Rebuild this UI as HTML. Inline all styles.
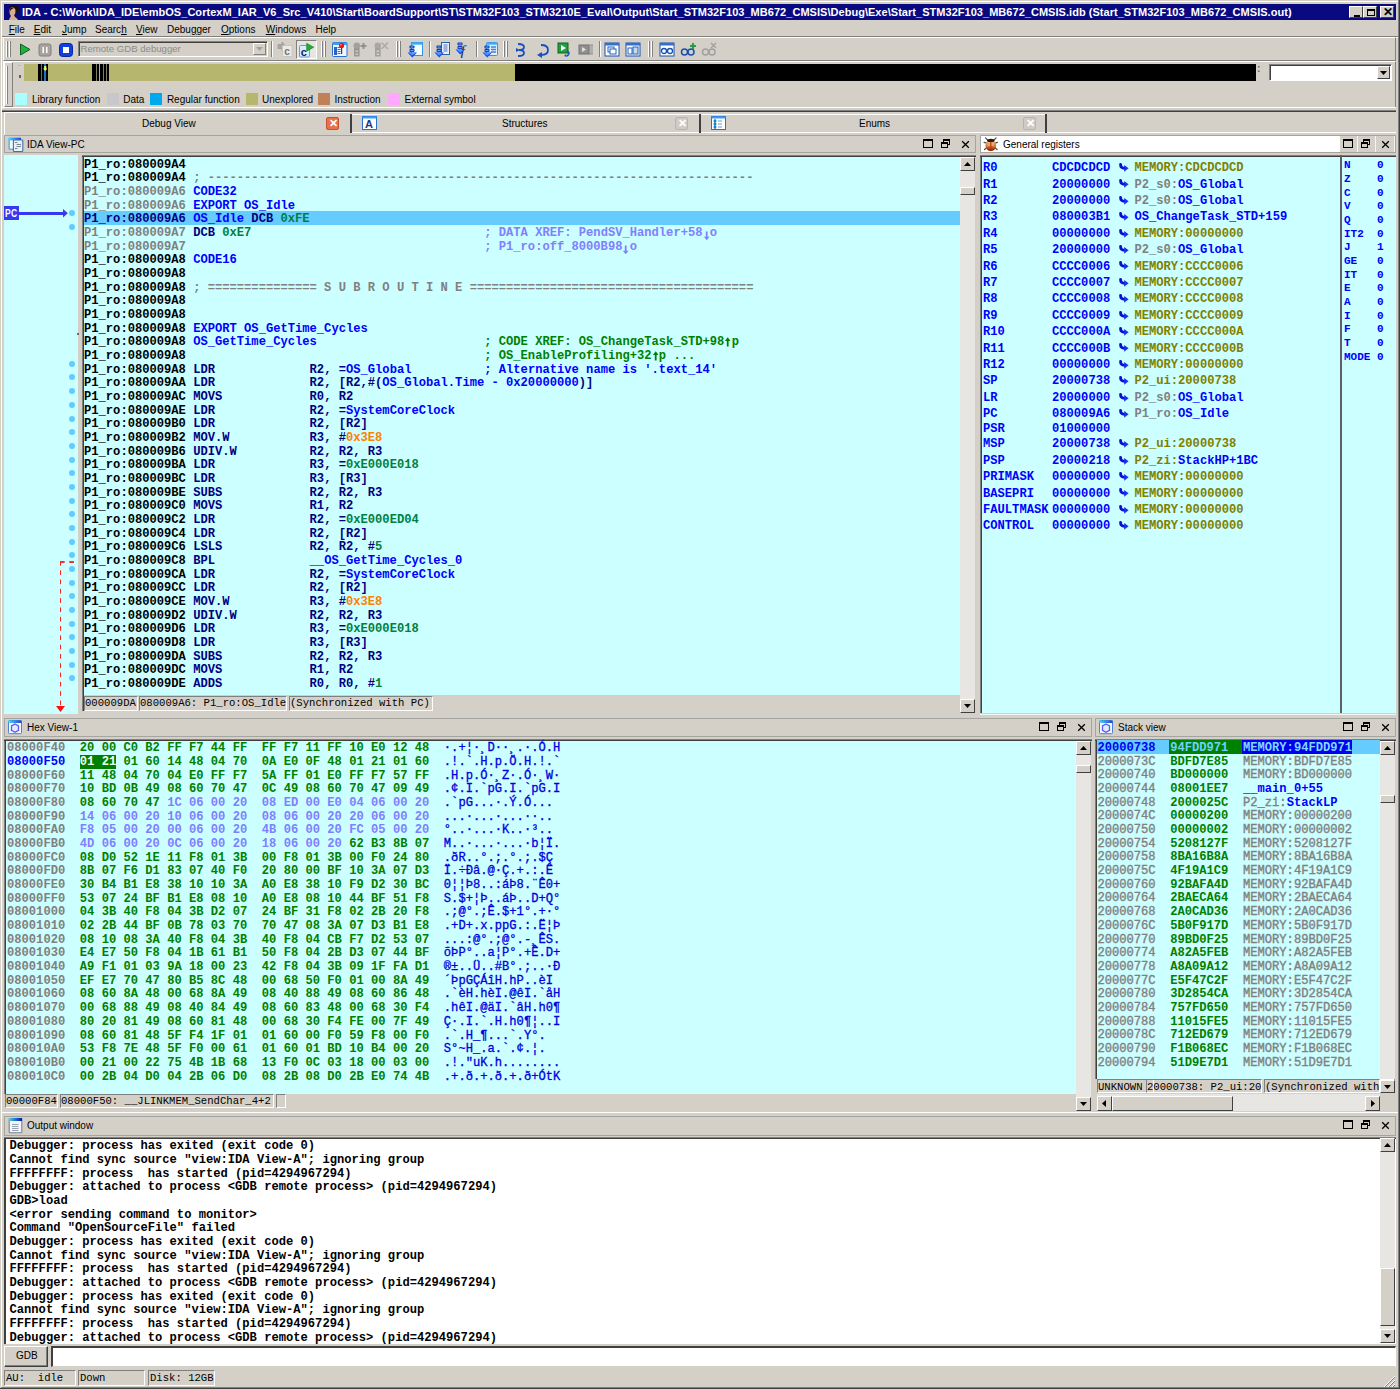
<!DOCTYPE html><html><head><meta charset="utf-8"><style>
*{margin:0;padding:0;box-sizing:border-box}
html,body{width:1400px;height:1389px;overflow:hidden;background:#d4d0c8}
body{position:relative;font-family:"Liberation Sans", sans-serif;font-size:10px;color:#000}
div{position:absolute}
.t{white-space:pre;line-height:12px}
.m{font-family:"Liberation Mono", monospace;font-weight:bold;font-size:12.14px;line-height:13.68px;white-space:pre}
.m div{position:static}
.ln{height:13.68px;white-space:pre}
.sunk{border-top:1px solid #808080;border-left:1px solid #808080;border-right:1px solid #fff;border-bottom:1px solid #fff}
.sunk2{border-top:2px solid #404040;border-left:2px solid #404040;border-right:1px solid #fff;border-bottom:1px solid #fff}
.rais{border-top:1px solid #fff;border-left:1px solid #fff;border-right:1px solid #404040;border-bottom:1px solid #404040;background:#d4d0c8}
.sm{font-family:'Liberation Mono',monospace;font-size:10.5px;line-height:13px;white-space:pre}
</style></head><body><div style="left:0px;top:0px;width:1400px;height:1389px;background:#d4d0c8"></div><div style="left:1px;top:1px;width:1398px;height:1px;background:#fff"></div><div style="left:1px;top:1px;width:1px;height:1387px;background:#fff"></div><div style="left:1398px;top:0px;width:1px;height:1389px;background:#808080"></div><div style="left:1399px;top:0px;width:1px;height:1389px;background:#404040"></div><div style="left:0px;top:1388px;width:1400px;height:1px;background:#404040"></div><div style="left:1px;top:1387px;width:1398px;height:1px;background:#808080"></div><div style="left:4px;top:4px;width:1392px;height:16px;background:#0a0a80"></div><svg style="position:absolute;left:6px;top:4px" width="14" height="16" viewBox="0 0 14 16">
<path d="M3 4 Q4 1 8 1 Q12 1 13 5 Q13 9 11 10 L10 8 Q10 5 8 4 Z" fill="#1a1008"/>
<path d="M3.5 5 Q4 3 7 3.5 Q9.5 4 9.5 7 Q9.5 10 8 11 L9 13 Q11 14 12 16 L3 16 Q4 13 5 12 Q3 10 3.5 5Z" fill="#d8b090"/>
<path d="M3.5 5 Q5 3 8 4 L6 5 Q4 6 4 8 Z" fill="#201008"/>
</svg><div class="t" style="left:22px;top:5px;color:#fff;font-weight:bold;font-size:11px;line-height:14px;letter-spacing:0.035px">IDA - C:\Work\IDA_IDE\embOS_CortexM_IAR_V6_Src_V410\Start\BoardSupport\ST\STM32F103_STM3210E_Eval\Output\Start_STM32F103_MB672_CMSIS\Debug\Exe\Start_STM32F103_MB672_CMSIS.idb (Start_STM32F103_MB672_CMSIS.out)</div><div style="left:1349px;top:6px;width:14px;height:12px;background:#d4d0c8;border-top:1px solid #fff;border-left:1px solid #fff;border-right:1px solid #404040;border-bottom:1px solid #404040"><div style="left:4px;top:8px;width:6px;height:2px;background:#000"></div></div><div style="left:1363px;top:6px;width:14px;height:12px;background:#d4d0c8;border-top:1px solid #fff;border-left:1px solid #fff;border-right:1px solid #404040;border-bottom:1px solid #404040"><div style="left:3px;top:2px;width:8px;height:7px;border:1px solid #000;border-top-width:2px"></div></div><div style="left:1380px;top:6px;width:14px;height:12px;background:#d4d0c8;border-top:1px solid #fff;border-left:1px solid #fff;border-right:1px solid #404040;border-bottom:1px solid #404040"><div class="t" style="left:2px;top:-1px;font-size:12px;font-weight:bold;line-height:12px">&#x2715;</div></div><div class="t" style="left:8.75px;top:24px;font-size:10px;line-height:12px"><u>F</u>ile</div><div class="t" style="left:33.75px;top:24px;font-size:10px;line-height:12px"><u>E</u>dit</div><div class="t" style="left:62px;top:24px;font-size:10px;line-height:12px"><u>J</u>ump</div><div class="t" style="left:95px;top:24px;font-size:10px;line-height:12px">Searc<u>h</u></div><div class="t" style="left:136px;top:24px;font-size:10px;line-height:12px"><u>V</u>iew</div><div class="t" style="left:167px;top:24px;font-size:10px;line-height:12px">Debu<u>g</u>ger</div><div class="t" style="left:221px;top:24px;font-size:10px;line-height:12px"><u>O</u>ptions</div><div class="t" style="left:265.75px;top:24px;font-size:10px;line-height:12px"><u>W</u>indows</div><div class="t" style="left:315.5px;top:24px;font-size:10px;line-height:12px">Help</div><div style="left:2px;top:36px;width:1396px;height:1px;background:#808080"></div><div style="left:2px;top:37px;width:1396px;height:1px;background:#fff"></div><div style="left:3px;top:37px;width:1393px;height:24px;border-top:1px solid #fff;border-left:1px solid #fff;border-bottom:1px solid #808080;border-right:1px solid #808080"></div><div style="left:6px;top:41px;width:2px;height:16px;border-left:1px solid #fff;border-right:1px solid #808080"></div><div style="left:9px;top:41px;width:2px;height:16px;border-left:1px solid #fff;border-right:1px solid #808080"></div><svg style="position:absolute;left:19px;top:43px" width="12" height="13" viewBox="0 0 12 13"><path d="M1.5 1 L11 6.5 L1.5 12 Z" fill="#20b040" stroke="#106020" stroke-width="1"/></svg><svg style="position:absolute;left:38px;top:43px" width="14" height="14" viewBox="0 0 14 14"><rect x="1" y="1" width="12" height="12" rx="2" fill="#a8a49c" stroke="#808080"/><rect x="4.5" y="4" width="1.5" height="6" fill="#fff"/><rect x="8" y="4" width="1.5" height="6" fill="#fff"/></svg><svg style="position:absolute;left:59px;top:43px" width="15" height="14" viewBox="0 0 15 14"><rect x="0.5" y="0.5" width="13" height="13" rx="3" fill="#1040e0" stroke="#0828a0"/><rect x="4" y="4" width="6" height="6" fill="#fff"/></svg><div style="left:78px;top:41px;width:190px;height:16px;background:#d4d0c8;border-top:1px solid #808080;border-left:1px solid #808080;border-right:1px solid #fff;border-bottom:1px solid #fff;box-shadow:inset 1px 1px 0 #404040"></div><div class="t" style="left:80.5px;top:43px;color:#8c8c8c;font-size:9.6px;line-height:12px">Remote GDB debugger</div><div style="left:253px;top:43px;width:13px;height:12px;background:#d4d0c8;border-top:1px solid #fff;border-left:1px solid #fff;border-right:1px solid #808080;border-bottom:1px solid #808080"><svg style="position:absolute;left:2px;top:3px" width="8" height="5"><path d="M0 0 L7 0 L3.5 4Z" fill="#a0a0a0"/></svg></div><div style="left:271px;top:41px;width:2px;height:16px;border-left:1px solid #808080;border-right:1px solid #fff"></div><svg style="position:absolute;left:277px;top:41px" width="17" height="17" viewBox="0 0 17 17"><path d="M1 3.5h4v-2.5l4 4.5l-4 4.5v-2.5h-4Z" fill="#a8a8a8" stroke="#909090" stroke-width="0.6"/><rect x="5.5" y="4.5" width="9.5" height="11" rx="1" fill="#eceae4" stroke="#c8c6c0"/><text x="7.2" y="14" font-family="Liberation Sans" font-weight="bold" font-size="10" fill="#707070">c</text></svg><div style="left:296px;top:39.5px;width:20.5px;height:19px;border-top:1px solid #808080;border-left:1px solid #808080;border-right:1px solid #fff;border-bottom:1px solid #fff;background:#e8e6e2"></div><svg style="position:absolute;left:298px;top:42px" width="18" height="16" viewBox="0 0 18 16"><rect x="1.5" y="3.5" width="10" height="11.5" rx="1" fill="#d8ecff" stroke="#7098d0"/><text x="2.8" y="13.5" font-family="Liberation Sans" font-weight="bold" font-size="11" fill="#101870">c</text><path d="M8.7 1.2 L15.8 5.2 L8.7 9.2Z" fill="#20b030" stroke="#108020" stroke-width="0.6"/></svg><div style="left:321px;top:41px;width:2px;height:16px;border-left:1px solid #fff;border-right:1px solid #808080"></div><div style="left:324px;top:41px;width:2px;height:16px;border-left:1px solid #fff;border-right:1px solid #808080"></div><svg style="position:absolute;left:332px;top:42px" width="16" height="16" viewBox="0 0 16 16"><rect x="0.5" y="0.5" width="14.5" height="14" rx="1" fill="#f0f6ff" stroke="#2870d0"/><rect x="0.5" y="0.5" width="14.5" height="2.5" fill="#40a0f0"/><rect x="2" y="5" width="3" height="8" fill="#3060c0"/><path d="M5.5 5.5h3M5.5 7.5h3M5.5 9.5h3M5.5 11.5h3" stroke="#4070c0" stroke-width="1"/><path d="M9.6 5 V12" stroke="#404040" stroke-width="1.2"/><circle cx="9.6" cy="3.4" r="2.6" fill="#e81818"/><circle cx="8.9" cy="2.7" r="0.8" fill="#ff9090"/></svg><svg style="position:absolute;left:353px;top:42px" width="16" height="16" viewBox="0 0 16 16"><circle cx="3.8" cy="3.8" r="3.3" fill="#a0a09c"/><rect x="1" y="6" width="5.6" height="8.5" fill="#989894"/><rect x="2.5" y="8.5" width="2.6" height="1.5" fill="#c8c8c4"/><rect x="2.5" y="11.5" width="2.6" height="1.5" fill="#c8c8c4"/><path d="M7.5 4h6M10.5 1v6" stroke="#909090" stroke-width="2"/></svg><svg style="position:absolute;left:374px;top:42px" width="16" height="16" viewBox="0 0 16 16"><circle cx="3.8" cy="3.8" r="3.3" fill="#a8a8a4"/><rect x="1" y="6" width="5.6" height="8.5" fill="#a0a09c"/><rect x="2.5" y="8.5" width="2.6" height="1.5" fill="#d0d0cc"/><rect x="2.5" y="11.5" width="2.6" height="1.5" fill="#d0d0cc"/><path d="M7.5 0.5l6.5 6.5M14 0.5l-6.5 6.5" stroke="#a8a8a8" stroke-width="1.3"/></svg><div style="left:396px;top:41px;width:2px;height:16px;border-left:1px solid #fff;border-right:1px solid #808080"></div><div style="left:399px;top:41px;width:2px;height:16px;border-left:1px solid #fff;border-right:1px solid #808080"></div><svg style="position:absolute;left:407px;top:42px" width="16" height="16" viewBox="0 0 16 16"><rect x="4.5" y="0.5" width="11" height="13" fill="#f0ffff" stroke="#3890e8"/><rect x="4.5" y="0.5" width="11" height="2.2" fill="#38b0f8"/><rect x="2.5" y="3.5" width="5" height="3" rx="0.8" fill="#1838b0"/><rect x="3.5" y="4.5" width="3" height="1" fill="#50c0ff"/><rect x="2.5" y="7.1" width="5" height="3" rx="0.8" fill="#1838b0"/><rect x="3.5" y="8.1" width="3" height="1" fill="#50c0ff"/><path d="M0.5 10.5 L10.0 10.5 L5.25 15.5Z" fill="#1848f0"/><path d="M2.0 11.1 L8.5 11.1 L5.25 13.5Z" fill="#40a0ff"/></svg><div style="left:429px;top:41px;width:2px;height:16px;border-left:1px solid #808080;border-right:1px solid #fff"></div><svg style="position:absolute;left:434px;top:42px" width="16" height="16" viewBox="0 0 16 16"><rect x="7.5" y="0.5" width="8" height="12" fill="#e8f0ff" stroke="#3060a0"/><path d="M9.5 3h4M9.5 5h4M9.5 7h4M9.5 9h4" stroke="#5070c0" stroke-width="1"/><rect x="2.5" y="3.5" width="5" height="3" rx="0.8" fill="#1838b0"/><rect x="3.5" y="4.5" width="3" height="1" fill="#50c0ff"/><rect x="2.5" y="7.1" width="5" height="3" rx="0.8" fill="#1838b0"/><rect x="3.5" y="8.1" width="3" height="1" fill="#50c0ff"/><path d="M0.5 10.5 L10.0 10.5 L5.25 15.5Z" fill="#1848f0"/><path d="M2.0 11.1 L8.5 11.1 L5.25 13.5Z" fill="#40a0ff"/></svg><svg style="position:absolute;left:455px;top:42px" width="16" height="16" viewBox="0 0 16 16"><text x="5.5" y="13.5" font-family="Liberation Serif" font-style="italic" font-size="15" fill="#202040">f</text><rect x="2.5" y="0.5" width="5" height="3" rx="0.8" fill="#1838b0"/><rect x="3.5" y="1.5" width="3" height="1" fill="#50c0ff"/><rect x="2.5" y="4.1" width="5" height="3" rx="0.8" fill="#1838b0"/><rect x="3.5" y="5.1" width="3" height="1" fill="#50c0ff"/><path d="M0.5 7.5 L10.0 7.5 L5.25 12.5Z" fill="#1848f0"/><path d="M2.0 8.1 L8.5 8.1 L5.25 10.5Z" fill="#40a0ff"/></svg><div style="left:476px;top:41px;width:2px;height:16px;border-left:1px solid #808080;border-right:1px solid #fff"></div><svg style="position:absolute;left:482px;top:42px" width="16" height="16" viewBox="0 0 16 16"><rect x="4.5" y="0.5" width="11" height="13" rx="1" fill="#e0f0ff" stroke="#3890e8"/><rect x="4.5" y="0.5" width="11" height="2.2" fill="#38b0f8"/><path d="M9 5h5M9 7.5h5M9 10h5" stroke="#4080e0" stroke-width="1.3"/><rect x="2.5" y="3.5" width="5" height="3" rx="0.8" fill="#1838b0"/><rect x="3.5" y="4.5" width="3" height="1" fill="#50c0ff"/><rect x="2.5" y="7.1" width="5" height="3" rx="0.8" fill="#1838b0"/><rect x="3.5" y="8.1" width="3" height="1" fill="#50c0ff"/><path d="M0.5 10.5 L10.0 10.5 L5.25 15.5Z" fill="#1848f0"/><path d="M2.0 11.1 L8.5 11.1 L5.25 13.5Z" fill="#40a0ff"/></svg><div style="left:503px;top:41px;width:2px;height:16px;border-left:1px solid #fff;border-right:1px solid #808080"></div><div style="left:506px;top:41px;width:2px;height:16px;border-left:1px solid #fff;border-right:1px solid #808080"></div><svg style="position:absolute;left:515px;top:42px" width="16" height="16" viewBox="0 0 16 16"><path d="M3 2 Q9 2 9 5 Q9 8 4 8 Q9 8 9 11 Q9 14 3 14" fill="none" stroke="#1850c0" stroke-width="1.8"/><path d="M1 6 L5 8 L1 10Z" fill="#1850c0"/></svg><svg style="position:absolute;left:535px;top:42px" width="16" height="16" viewBox="0 0 16 16"><path d="M6 3 Q13 3 13 8 Q13 13 6 13" fill="none" stroke="#1850c0" stroke-width="1.8"/><path d="M7 10 L2 13 L7 16Z" fill="#1850c0"/></svg><svg style="position:absolute;left:557px;top:42px" width="16" height="16" viewBox="0 0 16 16"><rect x="1" y="1" width="10" height="10" fill="#20a040" stroke="#106020"/><path d="M4 3 L9 6 L4 9Z" fill="#fff"/><path d="M10 9 Q14 11 10 14" fill="none" stroke="#1850c0" stroke-width="1.6"/><path d="M9 12 L7 14 L10 15Z" fill="#1850c0"/></svg><svg style="position:absolute;left:578px;top:42px" width="16" height="16" viewBox="0 0 16 16"><rect x="1" y="3" width="10" height="9" fill="#909090" stroke="#707070"/><path d="M4 5 L8 7.5 L4 10Z" fill="#e0e0e0"/><path d="M12 3v9M14 3v9M11 3h4M11 12h4" stroke="#909090"/></svg><div style="left:599px;top:41px;width:2px;height:16px;border-left:1px solid #808080;border-right:1px solid #fff"></div><svg style="position:absolute;left:604px;top:42px" width="16" height="16" viewBox="0 0 16 16"><rect x="1" y="1" width="14" height="13" fill="#fff" stroke="#1850b0"/><rect x="1" y="1" width="14" height="2.5" fill="#3070d0"/><rect x="4" y="5" width="6" height="5" fill="none" stroke="#2060c0"/><rect x="6" y="7" width="6" height="5" fill="#fff" stroke="#2060c0"/></svg><svg style="position:absolute;left:625px;top:42px" width="16" height="16" viewBox="0 0 16 16"><rect x="1" y="1" width="14" height="13" fill="#fff" stroke="#1850b0"/><rect x="1" y="1" width="14" height="2.5" fill="#3070d0"/><rect x="3" y="6" width="4" height="6" fill="none" stroke="#2060c0"/><rect x="8" y="5" width="5" height="7" fill="#c8d8f0" stroke="#2060c0"/></svg><div style="left:648px;top:41px;width:2px;height:16px;border-left:1px solid #fff;border-right:1px solid #808080"></div><div style="left:651px;top:41px;width:2px;height:16px;border-left:1px solid #fff;border-right:1px solid #808080"></div><svg style="position:absolute;left:659px;top:42px" width="16" height="16" viewBox="0 0 16 16"><rect x="1" y="1" width="14" height="13" fill="#fff" stroke="#1850b0"/><rect x="1" y="1" width="14" height="2.5" fill="#3070d0"/><circle cx="5" cy="9" r="2.5" fill="none" stroke="#1850b0" stroke-width="1.3"/><circle cx="11" cy="9" r="2.5" fill="none" stroke="#1850b0" stroke-width="1.3"/></svg><svg style="position:absolute;left:680px;top:42px" width="16" height="16" viewBox="0 0 16 16"><circle cx="4.5" cy="10" r="3" fill="none" stroke="#1850b0" stroke-width="1.5"/><circle cx="11" cy="10" r="3" fill="none" stroke="#1850b0" stroke-width="1.5"/><path d="M10 4h6M13 1v6" stroke="#20a040" stroke-width="2"/></svg><svg style="position:absolute;left:701px;top:42px" width="16" height="16" viewBox="0 0 16 16"><circle cx="4.5" cy="10" r="3" fill="none" stroke="#a0a0a0" stroke-width="1.5"/><circle cx="11" cy="10" r="3" fill="none" stroke="#a0a0a0" stroke-width="1.5"/><path d="M10 1l5 5M15 1l-5 5" stroke="#a0a0a0" stroke-width="1.3"/></svg><div style="left:3px;top:61px;width:1393px;height:47px;border-top:1px solid #fff;border-left:1px solid #fff;border-bottom:1px solid #808080;border-right:1px solid #808080"></div><div style="left:4px;top:62px;width:9px;height:45px;border-top:1px solid #fff;border-left:1px solid #fff;border-bottom:1px solid #808080;border-right:1px solid #808080"></div><div style="left:6px;top:66px;width:2px;height:38px;border-left:1px solid #fff;border-right:1px solid #808080"></div><div class="t" style="left:18px;top:63px;font-size:9px;color:#606060">&#x2D9;</div><div style="left:19px;top:75px;width:2px;height:3px;background:#606060"></div><div style="left:24px;top:64px;width:491px;height:17px;background:#b6b66e"></div><div style="left:515px;top:64px;width:741px;height:17px;background:#000"></div><div style="left:38px;top:64px;width:3px;height:17px;background:#000"></div><div style="left:41px;top:64px;width:1.2px;height:17px;background:#707050"></div><div style="left:42.2px;top:64px;width:5.9px;height:17px;background:#000"></div><div style="left:43.9px;top:64px;width:2.3px;height:17px;background:#1878b8"></div><svg style="position:absolute;left:42.8px;top:65.5px" width="4.5" height="5" viewBox="0 0 4.5 5"><path d="M1.2 0h2.1v2.4h1.2L2.25 5L0 2.4h1.2Z" fill="#ffff50"/></svg><div style="left:92px;top:64px;width:3.5px;height:17px;background:#000"></div><div style="left:96px;top:64px;width:3px;height:17px;background:#000"></div><div style="left:99.7px;top:64px;width:3px;height:17px;background:#000"></div><div style="left:103px;top:64px;width:2.5px;height:17px;background:#000"></div><div style="left:106px;top:64px;width:3px;height:17px;background:#000"></div><div style="left:95.5px;top:64px;width:0.7px;height:17px;background:#808060"></div><div style="left:102.7px;top:64px;width:0.7px;height:17px;background:#808060"></div><div style="left:105.5px;top:64px;width:0.7px;height:17px;background:#808060"></div><div class="t" style="left:1257px;top:63px;font-size:10px;color:#606060;font-weight:bold">:</div><div style="left:1269px;top:64px;width:123px;height:17px;background:#fff;border-top:1px solid #808080;border-left:1px solid #808080;border-right:1px solid #fff;border-bottom:1px solid #fff;box-shadow:inset 1px 1px 0 #404040"></div><div style="left:1377px;top:66px;width:13px;height:13px;background:#d4d0c8;border-top:1px solid #fff;border-left:1px solid #fff;border-right:1px solid #404040;border-bottom:1px solid #404040"><svg style="position:absolute;left:2px;top:4px" width="8" height="5"><path d="M0 0 L7 0 L3.5 4Z" fill="#000"/></svg></div><div style="left:15.4px;top:93px;width:12px;height:12px;background:#a8ffff"></div><div class="t" style="left:31.9px;top:93.5px;font-size:10px;line-height:12px">Library function</div><div style="left:106.8px;top:93px;width:12px;height:12px;background:#c8c8cc"></div><div class="t" style="left:123.3px;top:93.5px;font-size:10px;line-height:12px">Data</div><div style="left:150.4px;top:93px;width:12px;height:12px;background:#00a8f0"></div><div class="t" style="left:166.9px;top:93.5px;font-size:10px;line-height:12px">Regular function</div><div style="left:245.5px;top:93px;width:12px;height:12px;background:#b6b66e"></div><div class="t" style="left:262.0px;top:93.5px;font-size:10px;line-height:12px">Unexplored</div><div style="left:318px;top:93px;width:12px;height:12px;background:#c08058"></div><div class="t" style="left:334.5px;top:93.5px;font-size:10px;line-height:12px">Instruction</div><div style="left:388px;top:93px;width:12px;height:12px;background:#ffa8ff"></div><div class="t" style="left:404.5px;top:93.5px;font-size:10px;line-height:12px">External symbol</div><div style="left:2px;top:107px;width:1394px;height:1px;background:#fff"></div><div style="left:2px;top:110px;width:1394px;height:1px;background:#808080"></div><div style="left:2px;top:111px;width:1394px;height:1px;background:#404040"></div><div style="left:4px;top:112px;width:346px;height:23px;background:#d4d0c8;border-top:1px solid #fff;border-left:1px solid #fff"></div><div class="t" style="left:142px;top:118px;font-size:10px;line-height:12px">Debug View</div><div style="left:326px;top:117px;width:13px;height:13px;background:#e8704a;border:1px solid #c85030;border-radius:2px"><div class="t" style="left:2px;top:-1px;color:#fff;font-weight:bold;font-size:11px;line-height:12px">&#x2715;</div></div><div style="left:350px;top:114px;width:2px;height:19px;background:#404040"></div><div style="left:352px;top:114px;width:347px;height:1px;background:#fff"></div><div style="left:352px;top:132px;width:347px;height:1px;background:#fff"></div><svg style="position:absolute;left:362px;top:116px" width="15" height="14" viewBox="0 0 15 14"><rect x="0.5" y="0.5" width="14" height="13" fill="#fff" stroke="#2870d8"/><rect x="0.5" y="0.5" width="14" height="2" fill="#38a0f0"/><text x="3" y="12" font-family="Liberation Sans" font-weight="bold" font-size="11" fill="#203880">A</text></svg><div class="t" style="left:502px;top:118px;font-size:10px;line-height:12px">Structures</div><div style="left:675px;top:117px;width:13px;height:13px;background:#d0ccc4;border:1px solid #b8b4ac;border-radius:2px"><div class="t" style="left:2px;top:-1px;color:#fff;font-weight:bold;font-size:11px;line-height:12px">&#x2715;</div></div><div style="left:699px;top:114px;width:2px;height:19px;background:#404040"></div><div style="left:701px;top:114px;width:345px;height:1px;background:#fff"></div><div style="left:701px;top:132px;width:345px;height:1px;background:#fff"></div><svg style="position:absolute;left:711px;top:116px" width="15" height="14" viewBox="0 0 15 14"><rect x="0.5" y="0.5" width="14" height="13" fill="#fff" stroke="#2870d8"/><rect x="0.5" y="0.5" width="14" height="2" fill="#38a0f0"/><circle cx="4" cy="5" r="1.5" fill="#2080c0"/><circle cx="4" cy="8" r="1.5" fill="#2080c0"/><circle cx="4" cy="11" r="1.5" fill="#2080c0"/><path d="M7 5h4M7 8h4M7 11h4" stroke="#60a0d0"/><path d="M4 3v10" stroke="#2080c0"/></svg><div class="t" style="left:859px;top:118px;font-size:10px;line-height:12px">Enums</div><div style="left:1023px;top:117px;width:13px;height:13px;background:#d0ccc4;border:1px solid #b8b4ac;border-radius:2px"><div class="t" style="left:2px;top:-1px;color:#fff;font-weight:bold;font-size:11px;line-height:12px">&#x2715;</div></div><div style="left:1045px;top:114px;width:2px;height:19px;background:#404040"></div><div style="left:1047px;top:132px;width:349px;height:1px;background:#fff"></div><div style="left:4px;top:135px;width:972px;height:18px;background:#d4d0c8;border:1px solid #a4a4a0"></div><svg style="position:absolute;left:8px;top:137px" width="16" height="16" viewBox="0 0 16 16"><defs><linearGradient id="gb" x1="0" x2="1"><stop offset="0" stop-color="#40e0ff"/><stop offset="1" stop-color="#2040d0"/></linearGradient></defs><rect x="0.5" y="0.8" width="12.5" height="12" rx="1" fill="#5aa0e8"/><rect x="0.5" y="0.8" width="12.5" height="2.6" fill="url(#gb)"/><rect x="1.8" y="3.4" width="3.4" height="8.2" fill="#f0ffff"/><rect x="5.4" y="3" width="9.4" height="11.5" rx="0.8" fill="#e8f0ff" stroke="#4870a0" stroke-width="1.1"/><path d="M7 5.5h2.5M8.5 7.5h4.5M8.5 9.5h4.5M7 11.5h2.5" stroke="#606c78" stroke-width="0.8"/></svg><div class="t" style="left:27px;top:138.7px;font-size:10px;line-height:12px">IDA View-PC</div><div style="left:923px;top:139px;width:10px;height:9px;border:1px solid #000;border-top-width:2px"></div><div style="left:943px;top:139px;width:7px;height:6px;border:1px solid #000;border-top-width:2px"></div><div style="left:941px;top:142px;width:7px;height:6px;border:1px solid #000;border-top-width:2px;background:#d4d0c8"></div><svg style="position:absolute;left:960.5px;top:139.5px" width="9" height="9" viewBox="0 0 9 9"><path d="M1.2 1.2L7.8 7.8M7.8 1.2L1.2 7.8" stroke="#000" stroke-width="1.3"/></svg><div style="left:4px;top:155px;width:74px;height:559px;background:#ccffff"></div><div style="left:82px;top:155px;width:2px;height:556px;border-left:1px solid #808080;border-right:1px solid #404040"></div><div style="left:82px;top:155px;width:894px;height:2px;border-top:1px solid #808080;border-bottom:1px solid #404040"></div><div style="left:84px;top:157px;width:876px;height:538px;background:#ccffff"></div><div style="left:960px;top:157px;width:15px;height:556px;background:#e8e6e2"></div><div style="left:960px;top:157px;width:15px;height:14px;background:#d4d0c8;border-top:1px solid #fff;border-left:1px solid #fff;border-right:1px solid #404040;border-bottom:1px solid #404040"><svg style="position:absolute;left:3px;top:4px" width="8" height="5"><path d="M0 4 L7 4 L3.5 0Z" fill="#000"/></svg></div><div style="left:960px;top:699px;width:15px;height:14px;background:#d4d0c8;border-top:1px solid #fff;border-left:1px solid #fff;border-right:1px solid #404040;border-bottom:1px solid #404040"><svg style="position:absolute;left:3px;top:4px" width="8" height="5"><path d="M0 0 L7 0 L3.5 4Z" fill="#000"/></svg></div><div style="left:960px;top:187px;width:15px;height:8px;background:#d4d0c8;border-top:1px solid #fff;border-left:1px solid #fff;border-right:1px solid #404040;border-bottom:1px solid #404040"></div><div style="left:84px;top:211.42px;width:876px;height:13.68px;background:#66ccff"></div><div style="left:77px;top:333px;width:1.6px;height:1.6px;background:#404060;border-radius:1px"></div><div class="m" id="dis" style="left:84px;top:158.6px;width:876px"><div class="ln"><span style="color:#000000">P1_ro:080009A4</span></div><div class="ln"><span style="color:#000000">P1_ro:080009A4</span><span style="color:#808080"> ; ---------------------------------------------------------------------------</span></div><div class="ln"><span style="color:#808080">P1_ro:080009A6</span><span style="color:#0000ff"> CODE32</span></div><div class="ln"><span style="color:#808080">P1_ro:080009A6</span><span style="color:#0000ff"> EXPORT OS_Idle</span></div><div class="ln"><span style="color:#000080">P1_ro:080009A6</span><span style="color:#0000ff"> OS_Idle</span><span style="color:#000080"> DCB </span><span style="color:#008040">0xFE</span></div><div class="ln"><span style="color:#808080">P1_ro:080009A7</span><span style="color:#000080"> DCB </span><span style="color:#008040">0xE7</span>                                <span style="color:#8080ff">; DATA XREF: PendSV_Handler+58</span><svg width="7.285" height="13.68" style="vertical-align:top" viewBox="0 0 7.285 13.68"><path d="M2.8 4.5h1.8v5.2h1.9L3.7 13.3L0.9 9.7h1.9Z" fill="#8080ff"/></svg><span style="color:#8080ff">o</span></div><div class="ln"><span style="color:#808080">P1_ro:080009A7</span>                                         <span style="color:#8080ff">; P1_ro:off_8000B98</span><svg width="7.285" height="13.68" style="vertical-align:top" viewBox="0 0 7.285 13.68"><path d="M2.8 4.5h1.8v5.2h1.9L3.7 13.3L0.9 9.7h1.9Z" fill="#8080ff"/></svg><span style="color:#8080ff">o</span></div><div class="ln"><span style="color:#000000">P1_ro:080009A8</span><span style="color:#0000ff"> CODE16</span></div><div class="ln"><span style="color:#000000">P1_ro:080009A8</span></div><div class="ln"><span style="color:#000000">P1_ro:080009A8</span><span style="color:#808080"> ; =============== S U B R O U T I N E =======================================</span></div><div class="ln"><span style="color:#000000">P1_ro:080009A8</span></div><div class="ln"><span style="color:#000000">P1_ro:080009A8</span></div><div class="ln"><span style="color:#000000">P1_ro:080009A8</span><span style="color:#0000ff"> EXPORT OS_GetTime_Cycles</span></div><div class="ln"><span style="color:#000000">P1_ro:080009A8</span><span style="color:#0000ff"> OS_GetTime_Cycles</span>                       <span style="color:#008000">; CODE XREF: OS_ChangeTask_STD+98</span><svg width="7.285" height="13.68" style="vertical-align:top" viewBox="0 0 7.285 13.68"><path d="M2.8 10.5h1.8v-5.6h1.9L3.7 1.2L0.9 4.9h1.9Z" fill="#008000"/></svg><span style="color:#008000">p</span></div><div class="ln"><span style="color:#000000">P1_ro:080009A8</span>                                         <span style="color:#008000">; OS_EnableProfiling+32</span><svg width="7.285" height="13.68" style="vertical-align:top" viewBox="0 0 7.285 13.68"><path d="M2.8 10.5h1.8v-5.6h1.9L3.7 1.2L0.9 4.9h1.9Z" fill="#008000"/></svg><span style="color:#008000">p ...</span></div><div class="ln"><span style="color:#000000">P1_ro:080009A8</span><span style="color:#000080"> LDR             </span><span style="color:#000080">R2, =</span><span style="color:#0000ff">OS_Global</span>          <span style="color:#0000ff">; Alternative name is '.text_14'</span></div><div class="ln"><span style="color:#000000">P1_ro:080009AA</span><span style="color:#000080"> LDR             </span><span style="color:#000080">R2, [R2,#(</span><span style="color:#0000ff">OS_Global.Time - 0x20000000</span><span style="color:#000080">)]</span></div><div class="ln"><span style="color:#000000">P1_ro:080009AC</span><span style="color:#000080"> MOVS            </span><span style="color:#000080">R0, R2</span></div><div class="ln"><span style="color:#000000">P1_ro:080009AE</span><span style="color:#000080"> LDR             </span><span style="color:#000080">R2, =</span><span style="color:#0000ff">SystemCoreClock</span></div><div class="ln"><span style="color:#000000">P1_ro:080009B0</span><span style="color:#000080"> LDR             </span><span style="color:#000080">R2, [R2]</span></div><div class="ln"><span style="color:#000000">P1_ro:080009B2</span><span style="color:#000080"> MOV.W           </span><span style="color:#000080">R3, #</span><span style="color:#ff8000">0x3E8</span></div><div class="ln"><span style="color:#000000">P1_ro:080009B6</span><span style="color:#000080"> UDIV.W          </span><span style="color:#000080">R2, R2, R3</span></div><div class="ln"><span style="color:#000000">P1_ro:080009BA</span><span style="color:#000080"> LDR             </span><span style="color:#000080">R3, =</span><span style="color:#008040">0xE000E018</span></div><div class="ln"><span style="color:#000000">P1_ro:080009BC</span><span style="color:#000080"> LDR             </span><span style="color:#000080">R3, [R3]</span></div><div class="ln"><span style="color:#000000">P1_ro:080009BE</span><span style="color:#000080"> SUBS            </span><span style="color:#000080">R2, R2, R3</span></div><div class="ln"><span style="color:#000000">P1_ro:080009C0</span><span style="color:#000080"> MOVS            </span><span style="color:#000080">R1, R2</span></div><div class="ln"><span style="color:#000000">P1_ro:080009C2</span><span style="color:#000080"> LDR             </span><span style="color:#000080">R2, =</span><span style="color:#008040">0xE000ED04</span></div><div class="ln"><span style="color:#000000">P1_ro:080009C4</span><span style="color:#000080"> LDR             </span><span style="color:#000080">R2, [R2]</span></div><div class="ln"><span style="color:#000000">P1_ro:080009C6</span><span style="color:#000080"> LSLS            </span><span style="color:#000080">R2, R2, #</span><span style="color:#008040">5</span></div><div class="ln"><span style="color:#000000">P1_ro:080009C8</span><span style="color:#000080"> BPL             </span><span style="color:#0000ff">__OS_GetTime_Cycles_0</span></div><div class="ln"><span style="color:#000000">P1_ro:080009CA</span><span style="color:#000080"> LDR             </span><span style="color:#000080">R2, =</span><span style="color:#0000ff">SystemCoreClock</span></div><div class="ln"><span style="color:#000000">P1_ro:080009CC</span><span style="color:#000080"> LDR             </span><span style="color:#000080">R2, [R2]</span></div><div class="ln"><span style="color:#000000">P1_ro:080009CE</span><span style="color:#000080"> MOV.W           </span><span style="color:#000080">R3, #</span><span style="color:#ff8000">0x3E8</span></div><div class="ln"><span style="color:#000000">P1_ro:080009D2</span><span style="color:#000080"> UDIV.W          </span><span style="color:#000080">R2, R2, R3</span></div><div class="ln"><span style="color:#000000">P1_ro:080009D6</span><span style="color:#000080"> LDR             </span><span style="color:#000080">R3, =</span><span style="color:#008040">0xE000E018</span></div><div class="ln"><span style="color:#000000">P1_ro:080009D8</span><span style="color:#000080"> LDR             </span><span style="color:#000080">R3, [R3]</span></div><div class="ln"><span style="color:#000000">P1_ro:080009DA</span><span style="color:#000080"> SUBS            </span><span style="color:#000080">R2, R2, R3</span></div><div class="ln"><span style="color:#000000">P1_ro:080009DC</span><span style="color:#000080"> MOVS            </span><span style="color:#000080">R1, R2</span></div><div class="ln"><span style="color:#000000">P1_ro:080009DE</span><span style="color:#000080"> ADDS            </span><span style="color:#000080">R0, R0, #</span><span style="color:#008040">1</span></div></div><div style="left:4px;top:206px;width:15px;height:14px;background:#3838f0"></div><div class="t" style="left:5px;top:206.5px;color:#fff;font-weight:bold;font-size:10px;line-height:13px;letter-spacing:0.3px;transform:scaleX(0.85);transform-origin:0 0">PC</div><div style="left:19px;top:212px;width:44px;height:3px;background:#3838f0"></div><svg style="position:absolute;left:62.5px;top:209px" width="5" height="9" viewBox="0 0 5 9"><path d="M0 0 L4.8 4.3 L0 8.6Z" fill="#3838f0"/></svg><div style="left:69px;top:210.32px;width:6px;height:6px;background:#60ccff;border-radius:3px"></div><div style="left:69px;top:224.0px;width:6px;height:6px;background:#60ccff;border-radius:3px"></div><div style="left:69px;top:360.79999999999995px;width:6px;height:6px;background:#60ccff;border-radius:3px"></div><div style="left:69px;top:374.47999999999996px;width:6px;height:6px;background:#60ccff;border-radius:3px"></div><div style="left:69px;top:388.15999999999997px;width:6px;height:6px;background:#60ccff;border-radius:3px"></div><div style="left:69px;top:401.84px;width:6px;height:6px;background:#60ccff;border-radius:3px"></div><div style="left:69px;top:415.52px;width:6px;height:6px;background:#60ccff;border-radius:3px"></div><div style="left:69px;top:429.2px;width:6px;height:6px;background:#60ccff;border-radius:3px"></div><div style="left:69px;top:442.87999999999994px;width:6px;height:6px;background:#60ccff;border-radius:3px"></div><div style="left:69px;top:456.55999999999995px;width:6px;height:6px;background:#60ccff;border-radius:3px"></div><div style="left:69px;top:470.23999999999995px;width:6px;height:6px;background:#60ccff;border-radius:3px"></div><div style="left:69px;top:483.91999999999996px;width:6px;height:6px;background:#60ccff;border-radius:3px"></div><div style="left:69px;top:497.59999999999997px;width:6px;height:6px;background:#60ccff;border-radius:3px"></div><div style="left:69px;top:511.28px;width:6px;height:6px;background:#60ccff;border-radius:3px"></div><div style="left:69px;top:524.9599999999999px;width:6px;height:6px;background:#60ccff;border-radius:3px"></div><div style="left:69px;top:538.64px;width:6px;height:6px;background:#60ccff;border-radius:3px"></div><div style="left:69px;top:552.3199999999999px;width:6px;height:6px;background:#60ccff;border-radius:3px"></div><div style="left:69px;top:565.9999999999999px;width:6px;height:6px;background:#60ccff;border-radius:3px"></div><div style="left:69px;top:579.68px;width:6px;height:6px;background:#60ccff;border-radius:3px"></div><div style="left:69px;top:593.36px;width:6px;height:6px;background:#60ccff;border-radius:3px"></div><div style="left:69px;top:607.04px;width:6px;height:6px;background:#60ccff;border-radius:3px"></div><div style="left:69px;top:620.7199999999999px;width:6px;height:6px;background:#60ccff;border-radius:3px"></div><div style="left:69px;top:634.4px;width:6px;height:6px;background:#60ccff;border-radius:3px"></div><div style="left:69px;top:648.08px;width:6px;height:6px;background:#60ccff;border-radius:3px"></div><div style="left:69px;top:661.7599999999999px;width:6px;height:6px;background:#60ccff;border-radius:3px"></div><div style="left:69px;top:675.4399999999999px;width:6px;height:6px;background:#60ccff;border-radius:3px"></div><div style="left:60px;top:561px;width:14px;height:1.5px;background-image:linear-gradient(90deg,#ff3030 5px,transparent 5px);background-size:9.3px 1.5px"></div><div style="left:59.8px;top:561px;width:1.5px;height:146px;background-image:linear-gradient(180deg,#ff2020 5px,transparent 5px);background-size:1.5px 9.3px"></div><svg style="position:absolute;left:56px;top:706px" width="10" height="6" viewBox="0 0 10 6"><path d="M0 0 L9 0 L4.5 6Z" fill="#ff1010"/></svg><div style="left:84px;top:695px;width:876px;height:16px;background:#d4d0c8"></div><div style="left:84px;top:696px;width:54px;height:15px;border-top:1px solid #808080;border-left:1px solid #808080;border-right:1px solid #fff;border-bottom:1px solid #fff"></div><div class="t" style="left:85px;top:697px;font-family:'Liberation Mono',monospace;font-size:10.6px;line-height:13px">000009DA</div><div style="left:139px;top:696px;width:148px;height:15px;border-top:1px solid #808080;border-left:1px solid #808080;border-right:1px solid #fff;border-bottom:1px solid #fff"></div><div class="t" style="left:140px;top:697px;font-family:'Liberation Mono',monospace;font-size:10.6px;line-height:13px">080009A6: P1_ro:OS_Idle</div><div style="left:289px;top:696px;width:144px;height:15px;border-top:1px solid #808080;border-left:1px solid #808080;border-right:1px solid #fff;border-bottom:1px solid #fff"></div><div class="t" style="left:290px;top:697px;font-family:'Liberation Mono',monospace;font-size:10.6px;line-height:13px">(Synchronized with PC)</div><div style="left:980px;top:135px;width:416px;height:18px;background:#fff;border:1px solid #a4a4a0"></div><svg style="position:absolute;left:983px;top:135.5px" width="17" height="16" viewBox="0 0 17 16"><defs><linearGradient id="gbug" x1="0" y1="0" x2="0" y2="1"><stop offset="0" stop-color="#f0b070"/><stop offset="0.55" stop-color="#d07830"/><stop offset="1" stop-color="#900800"/></linearGradient></defs><path d="M2.5 1.9L5.2 4.6M13.1 1.9L10.4 4.6M1.1 6.4L3.6 7.2M14.5 6.4L12 7.2M1.5 13.6L4 11.4M14.1 13.6L11.6 11.4" stroke="#505050" stroke-width="1.3" stroke-linecap="round"/><ellipse cx="7.8" cy="9.6" rx="5.3" ry="5.5" fill="url(#gbug)"/><ellipse cx="7.8" cy="4.4" rx="3.8" ry="1.7" fill="#301808"/><path d="M7.8 5.5V14.5" stroke="#a83810" stroke-width="0.9"/><ellipse cx="5.6" cy="8.3" rx="1.4" ry="2.2" fill="#f8c090" opacity="0.55"/><ellipse cx="10" cy="8.3" rx="1.4" ry="2.2" fill="#f8c090" opacity="0.55"/></svg><div class="t" style="left:1003px;top:138.7px;font-size:10px;line-height:12px">General registers</div><div style="left:1340px;top:136px;width:55px;height:16px;background:#d4d0c8"></div><div style="left:1357px;top:136px;width:1px;height:16px;background:#f4f4f0"></div><div style="left:1375px;top:136px;width:1px;height:16px;background:#f4f4f0"></div><div style="left:1394px;top:136px;width:1px;height:16px;background:#f4f4f0"></div><div style="left:1343px;top:139px;width:10px;height:9px;border:1px solid #000;border-top-width:2px"></div><div style="left:1363px;top:139px;width:7px;height:6px;border:1px solid #000;border-top-width:2px"></div><div style="left:1361px;top:142px;width:7px;height:6px;border:1px solid #000;border-top-width:2px;background:#d4d0c8"></div><svg style="position:absolute;left:1380.5px;top:139.5px" width="9" height="9" viewBox="0 0 9 9"><path d="M1.2 1.2L7.8 7.8M7.8 1.2L1.2 7.8" stroke="#000" stroke-width="1.3"/></svg><div style="left:980px;top:155px;width:416px;height:559px;background:#ccffff"></div><div style="left:980px;top:155px;width:2px;height:559px;border-left:1px solid #808080;border-right:1px solid #404040"></div><div style="left:980px;top:155px;width:361px;height:2px;border-top:1px solid #808080;border-bottom:1px solid #404040"></div><div style="left:1340px;top:155px;width:2px;height:559px;background:#606060"></div><div style="left:1342px;top:155px;width:54px;height:2px;border-top:1px solid #808080;border-bottom:1px solid #404040"></div><div style="left:980px;top:713px;width:416px;height:1px;background:#d4d0c8"></div><div style="left:980px;top:714px;width:416px;height:1px;background:#f4f4f0"></div><div class="m" style="left:983px;top:162.16px;color:#0000ff">R0</div><div class="m" style="left:1052px;top:162.16px;color:#0000ff">CDCDCDCD</div><svg style="position:absolute;left:1117.5px;top:161.9px" width="11" height="11" viewBox="0 0 11 11"><path d="M2.6 2.4 Q2.4 6.3 6.6 6.3" fill="none" stroke="#0810d0" stroke-width="2.9" stroke-linecap="round"/><path d="M6.2 2.9 L10.6 6.3 L6.2 9.8Z" fill="#1830f0"/></svg><div class="m" style="left:1134.4px;top:162.16px"><span style="color:#808000">MEMORY:CDCDCDCD</span></div><div class="m" style="left:983px;top:178.57px;color:#0000ff">R1</div><div class="m" style="left:1052px;top:178.57px;color:#0000ff">20000000</div><svg style="position:absolute;left:1117.5px;top:178.31px" width="11" height="11" viewBox="0 0 11 11"><path d="M2.6 2.4 Q2.4 6.3 6.6 6.3" fill="none" stroke="#0810d0" stroke-width="2.9" stroke-linecap="round"/><path d="M6.2 2.9 L10.6 6.3 L6.2 9.8Z" fill="#1830f0"/></svg><div class="m" style="left:1134.4px;top:178.57px"><span style="color:#808080">P2_s0:</span><span style="color:#0000ff">OS_Global</span></div><div class="m" style="left:983px;top:194.98px;color:#0000ff">R2</div><div class="m" style="left:1052px;top:194.98px;color:#0000ff">20000000</div><svg style="position:absolute;left:1117.5px;top:194.72px" width="11" height="11" viewBox="0 0 11 11"><path d="M2.6 2.4 Q2.4 6.3 6.6 6.3" fill="none" stroke="#0810d0" stroke-width="2.9" stroke-linecap="round"/><path d="M6.2 2.9 L10.6 6.3 L6.2 9.8Z" fill="#1830f0"/></svg><div class="m" style="left:1134.4px;top:194.98px"><span style="color:#808080">P2_s0:</span><span style="color:#0000ff">OS_Global</span></div><div class="m" style="left:983px;top:211.39px;color:#0000ff">R3</div><div class="m" style="left:1052px;top:211.39px;color:#0000ff">080003B1</div><svg style="position:absolute;left:1117.5px;top:211.13px" width="11" height="11" viewBox="0 0 11 11"><path d="M2.6 2.4 Q2.4 6.3 6.6 6.3" fill="none" stroke="#0810d0" stroke-width="2.9" stroke-linecap="round"/><path d="M6.2 2.9 L10.6 6.3 L6.2 9.8Z" fill="#1830f0"/></svg><div class="m" style="left:1134.4px;top:211.39px"><span style="color:#0000ff">OS_ChangeTask_STD+159</span></div><div class="m" style="left:983px;top:227.80px;color:#0000ff">R4</div><div class="m" style="left:1052px;top:227.80px;color:#0000ff">00000000</div><svg style="position:absolute;left:1117.5px;top:227.54px" width="11" height="11" viewBox="0 0 11 11"><path d="M2.6 2.4 Q2.4 6.3 6.6 6.3" fill="none" stroke="#0810d0" stroke-width="2.9" stroke-linecap="round"/><path d="M6.2 2.9 L10.6 6.3 L6.2 9.8Z" fill="#1830f0"/></svg><div class="m" style="left:1134.4px;top:227.80px"><span style="color:#808000">MEMORY:00000000</span></div><div class="m" style="left:983px;top:244.21px;color:#0000ff">R5</div><div class="m" style="left:1052px;top:244.21px;color:#0000ff">20000000</div><svg style="position:absolute;left:1117.5px;top:243.95px" width="11" height="11" viewBox="0 0 11 11"><path d="M2.6 2.4 Q2.4 6.3 6.6 6.3" fill="none" stroke="#0810d0" stroke-width="2.9" stroke-linecap="round"/><path d="M6.2 2.9 L10.6 6.3 L6.2 9.8Z" fill="#1830f0"/></svg><div class="m" style="left:1134.4px;top:244.21px"><span style="color:#808080">P2_s0:</span><span style="color:#0000ff">OS_Global</span></div><div class="m" style="left:983px;top:260.62px;color:#0000ff">R6</div><div class="m" style="left:1052px;top:260.62px;color:#0000ff">CCCC0006</div><svg style="position:absolute;left:1117.5px;top:260.36px" width="11" height="11" viewBox="0 0 11 11"><path d="M2.6 2.4 Q2.4 6.3 6.6 6.3" fill="none" stroke="#0810d0" stroke-width="2.9" stroke-linecap="round"/><path d="M6.2 2.9 L10.6 6.3 L6.2 9.8Z" fill="#1830f0"/></svg><div class="m" style="left:1134.4px;top:260.62px"><span style="color:#808000">MEMORY:CCCC0006</span></div><div class="m" style="left:983px;top:277.03px;color:#0000ff">R7</div><div class="m" style="left:1052px;top:277.03px;color:#0000ff">CCCC0007</div><svg style="position:absolute;left:1117.5px;top:276.77000000000004px" width="11" height="11" viewBox="0 0 11 11"><path d="M2.6 2.4 Q2.4 6.3 6.6 6.3" fill="none" stroke="#0810d0" stroke-width="2.9" stroke-linecap="round"/><path d="M6.2 2.9 L10.6 6.3 L6.2 9.8Z" fill="#1830f0"/></svg><div class="m" style="left:1134.4px;top:277.03px"><span style="color:#808000">MEMORY:CCCC0007</span></div><div class="m" style="left:983px;top:293.44px;color:#0000ff">R8</div><div class="m" style="left:1052px;top:293.44px;color:#0000ff">CCCC0008</div><svg style="position:absolute;left:1117.5px;top:293.18000000000006px" width="11" height="11" viewBox="0 0 11 11"><path d="M2.6 2.4 Q2.4 6.3 6.6 6.3" fill="none" stroke="#0810d0" stroke-width="2.9" stroke-linecap="round"/><path d="M6.2 2.9 L10.6 6.3 L6.2 9.8Z" fill="#1830f0"/></svg><div class="m" style="left:1134.4px;top:293.44px"><span style="color:#808000">MEMORY:CCCC0008</span></div><div class="m" style="left:983px;top:309.85px;color:#0000ff">R9</div><div class="m" style="left:1052px;top:309.85px;color:#0000ff">CCCC0009</div><svg style="position:absolute;left:1117.5px;top:309.5900000000001px" width="11" height="11" viewBox="0 0 11 11"><path d="M2.6 2.4 Q2.4 6.3 6.6 6.3" fill="none" stroke="#0810d0" stroke-width="2.9" stroke-linecap="round"/><path d="M6.2 2.9 L10.6 6.3 L6.2 9.8Z" fill="#1830f0"/></svg><div class="m" style="left:1134.4px;top:309.85px"><span style="color:#808000">MEMORY:CCCC0009</span></div><div class="m" style="left:983px;top:326.26px;color:#0000ff">R10</div><div class="m" style="left:1052px;top:326.26px;color:#0000ff">CCCC000A</div><svg style="position:absolute;left:1117.5px;top:326.0000000000001px" width="11" height="11" viewBox="0 0 11 11"><path d="M2.6 2.4 Q2.4 6.3 6.6 6.3" fill="none" stroke="#0810d0" stroke-width="2.9" stroke-linecap="round"/><path d="M6.2 2.9 L10.6 6.3 L6.2 9.8Z" fill="#1830f0"/></svg><div class="m" style="left:1134.4px;top:326.26px"><span style="color:#808000">MEMORY:CCCC000A</span></div><div class="m" style="left:983px;top:342.67px;color:#0000ff">R11</div><div class="m" style="left:1052px;top:342.67px;color:#0000ff">CCCC000B</div><svg style="position:absolute;left:1117.5px;top:342.41000000000014px" width="11" height="11" viewBox="0 0 11 11"><path d="M2.6 2.4 Q2.4 6.3 6.6 6.3" fill="none" stroke="#0810d0" stroke-width="2.9" stroke-linecap="round"/><path d="M6.2 2.9 L10.6 6.3 L6.2 9.8Z" fill="#1830f0"/></svg><div class="m" style="left:1134.4px;top:342.67px"><span style="color:#808000">MEMORY:CCCC000B</span></div><div class="m" style="left:983px;top:359.08px;color:#0000ff">R12</div><div class="m" style="left:1052px;top:359.08px;color:#0000ff">00000000</div><svg style="position:absolute;left:1117.5px;top:358.82000000000016px" width="11" height="11" viewBox="0 0 11 11"><path d="M2.6 2.4 Q2.4 6.3 6.6 6.3" fill="none" stroke="#0810d0" stroke-width="2.9" stroke-linecap="round"/><path d="M6.2 2.9 L10.6 6.3 L6.2 9.8Z" fill="#1830f0"/></svg><div class="m" style="left:1134.4px;top:359.08px"><span style="color:#808000">MEMORY:00000000</span></div><div class="m" style="left:983px;top:375.49px;color:#0000ff">SP</div><div class="m" style="left:1052px;top:375.49px;color:#0000ff">20000738</div><svg style="position:absolute;left:1117.5px;top:375.2300000000002px" width="11" height="11" viewBox="0 0 11 11"><path d="M2.6 2.4 Q2.4 6.3 6.6 6.3" fill="none" stroke="#0810d0" stroke-width="2.9" stroke-linecap="round"/><path d="M6.2 2.9 L10.6 6.3 L6.2 9.8Z" fill="#1830f0"/></svg><div class="m" style="left:1134.4px;top:375.49px"><span style="color:#808000">P2_ui:20000738</span></div><div class="m" style="left:983px;top:391.90px;color:#0000ff">LR</div><div class="m" style="left:1052px;top:391.90px;color:#0000ff">20000000</div><svg style="position:absolute;left:1117.5px;top:391.6400000000002px" width="11" height="11" viewBox="0 0 11 11"><path d="M2.6 2.4 Q2.4 6.3 6.6 6.3" fill="none" stroke="#0810d0" stroke-width="2.9" stroke-linecap="round"/><path d="M6.2 2.9 L10.6 6.3 L6.2 9.8Z" fill="#1830f0"/></svg><div class="m" style="left:1134.4px;top:391.90px"><span style="color:#808080">P2_s0:</span><span style="color:#0000ff">OS_Global</span></div><div class="m" style="left:983px;top:408.31px;color:#0000ff">PC</div><div class="m" style="left:1052px;top:408.31px;color:#0000ff">080009A6</div><svg style="position:absolute;left:1117.5px;top:408.05000000000024px" width="11" height="11" viewBox="0 0 11 11"><path d="M2.6 2.4 Q2.4 6.3 6.6 6.3" fill="none" stroke="#0810d0" stroke-width="2.9" stroke-linecap="round"/><path d="M6.2 2.9 L10.6 6.3 L6.2 9.8Z" fill="#1830f0"/></svg><div class="m" style="left:1134.4px;top:408.31px"><span style="color:#808080">P1_ro:</span><span style="color:#0000ff">OS_Idle</span></div><div class="m" style="left:983px;top:423.35px;color:#0000ff">PSR</div><div class="m" style="left:1052px;top:423.35px;color:#0000ff">01000000</div><div class="m" style="left:983px;top:438.39px;color:#0000ff">MSP</div><div class="m" style="left:1052px;top:438.39px;color:#0000ff">20000738</div><svg style="position:absolute;left:1117.5px;top:438.1300000000003px" width="11" height="11" viewBox="0 0 11 11"><path d="M2.6 2.4 Q2.4 6.3 6.6 6.3" fill="none" stroke="#0810d0" stroke-width="2.9" stroke-linecap="round"/><path d="M6.2 2.9 L10.6 6.3 L6.2 9.8Z" fill="#1830f0"/></svg><div class="m" style="left:1134.4px;top:438.39px"><span style="color:#808000">P2_ui:20000738</span></div><div class="m" style="left:983px;top:454.80px;color:#0000ff">PSP</div><div class="m" style="left:1052px;top:454.80px;color:#0000ff">20000218</div><svg style="position:absolute;left:1117.5px;top:454.5400000000003px" width="11" height="11" viewBox="0 0 11 11"><path d="M2.6 2.4 Q2.4 6.3 6.6 6.3" fill="none" stroke="#0810d0" stroke-width="2.9" stroke-linecap="round"/><path d="M6.2 2.9 L10.6 6.3 L6.2 9.8Z" fill="#1830f0"/></svg><div class="m" style="left:1134.4px;top:454.80px"><span style="color:#808000">P2_zi:</span><span style="color:#0000ff">StackHP+1BC</span></div><div class="m" style="left:983px;top:471.21px;color:#0000ff">PRIMASK</div><div class="m" style="left:1052px;top:471.21px;color:#0000ff">00000000</div><svg style="position:absolute;left:1117.5px;top:470.95000000000033px" width="11" height="11" viewBox="0 0 11 11"><path d="M2.6 2.4 Q2.4 6.3 6.6 6.3" fill="none" stroke="#0810d0" stroke-width="2.9" stroke-linecap="round"/><path d="M6.2 2.9 L10.6 6.3 L6.2 9.8Z" fill="#1830f0"/></svg><div class="m" style="left:1134.4px;top:471.21px"><span style="color:#808000">MEMORY:00000000</span></div><div class="m" style="left:983px;top:487.62px;color:#0000ff">BASEPRI</div><div class="m" style="left:1052px;top:487.62px;color:#0000ff">00000000</div><svg style="position:absolute;left:1117.5px;top:487.36000000000035px" width="11" height="11" viewBox="0 0 11 11"><path d="M2.6 2.4 Q2.4 6.3 6.6 6.3" fill="none" stroke="#0810d0" stroke-width="2.9" stroke-linecap="round"/><path d="M6.2 2.9 L10.6 6.3 L6.2 9.8Z" fill="#1830f0"/></svg><div class="m" style="left:1134.4px;top:487.62px"><span style="color:#808000">MEMORY:00000000</span></div><div class="m" style="left:983px;top:504.03px;color:#0000ff">FAULTMASK</div><div class="m" style="left:1052px;top:504.03px;color:#0000ff">00000000</div><svg style="position:absolute;left:1117.5px;top:503.7700000000004px" width="11" height="11" viewBox="0 0 11 11"><path d="M2.6 2.4 Q2.4 6.3 6.6 6.3" fill="none" stroke="#0810d0" stroke-width="2.9" stroke-linecap="round"/><path d="M6.2 2.9 L10.6 6.3 L6.2 9.8Z" fill="#1830f0"/></svg><div class="m" style="left:1134.4px;top:504.03px"><span style="color:#808000">MEMORY:00000000</span></div><div class="m" style="left:983px;top:520.44px;color:#0000ff">CONTROL</div><div class="m" style="left:1052px;top:520.44px;color:#0000ff">00000000</div><svg style="position:absolute;left:1117.5px;top:520.1800000000004px" width="11" height="11" viewBox="0 0 11 11"><path d="M2.6 2.4 Q2.4 6.3 6.6 6.3" fill="none" stroke="#0810d0" stroke-width="2.9" stroke-linecap="round"/><path d="M6.2 2.9 L10.6 6.3 L6.2 9.8Z" fill="#1830f0"/></svg><div class="m" style="left:1134.4px;top:520.44px"><span style="color:#808000">MEMORY:00000000</span></div><div class="m" style="left:1344px;top:159.26px;color:#0000ff;font-size:11px;letter-spacing:0px"><div class="ln">N    0</div><div class="ln">Z    0</div><div class="ln">C    0</div><div class="ln">V    0</div><div class="ln">Q    0</div><div class="ln">IT2  0</div><div class="ln">J    1</div><div class="ln">GE   0</div><div class="ln">IT   0</div><div class="ln">E    0</div><div class="ln">A    0</div><div class="ln">I    0</div><div class="ln">F    0</div><div class="ln">T    0</div><div class="ln">MODE 0</div></div><div style="left:4px;top:718px;width:1088px;height:19px;background:#d4d0c8;border:1px solid #a4a4a0"></div><svg style="position:absolute;left:8px;top:720px" width="15" height="15" viewBox="0 0 15 15"><defs><linearGradient id="ghx8" x1="0" x2="1"><stop offset="0" stop-color="#40e0ff"/><stop offset="1" stop-color="#2040d0"/></linearGradient></defs><rect x="0.5" y="0.5" width="13" height="13.2" rx="1" fill="#f4f8ff" stroke="#4a80d8"/><rect x="0.5" y="0.5" width="13" height="2.5" fill="url(#ghx8)"/><path d="M7 4 L10.5 6 L10.5 10.3 L7 12.3 L3.5 10.3 L3.5 6Z" fill="#e0ecff" stroke="#5a5af8" stroke-width="1.3"/></svg><div class="t" style="left:27px;top:721.7px;font-size:10px;line-height:12px">Hex View-1</div><div style="left:1039px;top:722px;width:10px;height:9px;border:1px solid #000;border-top-width:2px"></div><div style="left:1059px;top:722px;width:7px;height:6px;border:1px solid #000;border-top-width:2px"></div><div style="left:1057px;top:725px;width:7px;height:6px;border:1px solid #000;border-top-width:2px;background:#d4d0c8"></div><svg style="position:absolute;left:1076.5px;top:722.5px" width="9" height="9" viewBox="0 0 9 9"><path d="M1.2 1.2L7.8 7.8M7.8 1.2L1.2 7.8" stroke="#000" stroke-width="1.3"/></svg><div style="left:4px;top:739px;width:1088px;height:372px;background:#d4d0c8"></div><div style="left:4px;top:739px;width:2px;height:355px;border-left:1px solid #808080;border-right:1px solid #404040"></div><div style="left:4px;top:739px;width:1088px;height:2px;border-top:1px solid #808080;border-bottom:1px solid #404040"></div><div style="left:6px;top:741px;width:1070px;height:353px;background:#ccffff"></div><div style="left:1076px;top:741px;width:15px;height:370px;background:#e8e6e2"></div><div style="left:1076px;top:741px;width:15px;height:14px;background:#d4d0c8;border-top:1px solid #fff;border-left:1px solid #fff;border-right:1px solid #404040;border-bottom:1px solid #404040"><svg style="position:absolute;left:3px;top:4px" width="8" height="5"><path d="M0 4 L7 4 L3.5 0Z" fill="#000"/></svg></div><div style="left:1076px;top:1097px;width:15px;height:14px;background:#d4d0c8;border-top:1px solid #fff;border-left:1px solid #fff;border-right:1px solid #404040;border-bottom:1px solid #404040"><svg style="position:absolute;left:3px;top:4px" width="8" height="5"><path d="M0 0 L7 0 L3.5 4Z" fill="#000"/></svg></div><div style="left:1076px;top:765px;width:15px;height:8px;background:#d4d0c8;border-top:1px solid #fff;border-left:1px solid #fff;border-right:1px solid #404040;border-bottom:1px solid #404040"></div><div class="m" style="left:7px;top:742.40px"><div class="ln"><span style="color:#808080">08000F40</span>  <span style="color:#008000">20</span> <span style="color:#008000">00</span> <span style="color:#008000">C0</span> <span style="color:#008000">B2</span> <span style="color:#008000">FF</span> <span style="color:#008000">F7</span> <span style="color:#008000">44</span> <span style="color:#008000">FF</span>  <span style="color:#008000">FF</span> <span style="color:#008000">F7</span> <span style="color:#008000">11</span> <span style="color:#008000">FF</span> <span style="color:#008000">10</span> <span style="color:#008000">E0</span> <span style="color:#008000">12</span> <span style="color:#008000">48</span>  <span style="color:#0000e0;font-weight:normal;-webkit-text-stroke:0.3px #0000e0">·.+¦·¸D··¸.·.Ó.H</span></div><div class="ln"><span style="color:#0000ff">08000F50</span>  <span style="background:#008000;color:#f0fff0">01 </span><span style="background:#008000;color:#f0fff0">21</span> <span style="color:#008000">01</span> <span style="color:#008000">60</span> <span style="color:#008000">14</span> <span style="color:#008000">48</span> <span style="color:#008000">04</span> <span style="color:#008000">70</span>  <span style="color:#008000">0A</span> <span style="color:#008000">E0</span> <span style="color:#008000">0F</span> <span style="color:#008000">48</span> <span style="color:#008000">01</span> <span style="color:#008000">21</span> <span style="color:#008000">01</span> <span style="color:#008000">60</span>  <span style="color:#0000e0;font-weight:normal;-webkit-text-stroke:0.3px #0000e0">.!.`.H.p.Ö.H.!.`</span></div><div class="ln"><span style="color:#808080">08000F60</span>  <span style="color:#008000">11</span> <span style="color:#008000">48</span> <span style="color:#008000">04</span> <span style="color:#008000">70</span> <span style="color:#008000">04</span> <span style="color:#008000">E0</span> <span style="color:#008000">FF</span> <span style="color:#008000">F7</span>  <span style="color:#008000">5A</span> <span style="color:#008000">FF</span> <span style="color:#008000">01</span> <span style="color:#008000">E0</span> <span style="color:#008000">FF</span> <span style="color:#008000">F7</span> <span style="color:#008000">57</span> <span style="color:#008000">FF</span>  <span style="color:#0000e0;font-weight:normal;-webkit-text-stroke:0.3px #0000e0">.H.p.Ó·¸Z·.Ó·¸W·</span></div><div class="ln"><span style="color:#808080">08000F70</span>  <span style="color:#008000">10</span> <span style="color:#008000">BD</span> <span style="color:#008000">0B</span> <span style="color:#008000">49</span> <span style="color:#008000">08</span> <span style="color:#008000">60</span> <span style="color:#008000">70</span> <span style="color:#008000">47</span>  <span style="color:#008000">0C</span> <span style="color:#008000">49</span> <span style="color:#008000">08</span> <span style="color:#008000">60</span> <span style="color:#008000">70</span> <span style="color:#008000">47</span> <span style="color:#008000">09</span> <span style="color:#008000">49</span>  <span style="color:#0000e0;font-weight:normal;-webkit-text-stroke:0.3px #0000e0">.¢.I.`pG.I.`pG.I</span></div><div class="ln"><span style="color:#808080">08000F80</span>  <span style="color:#008000">08</span> <span style="color:#008000">60</span> <span style="color:#008000">70</span> <span style="color:#008000">47</span> <span style="color:#8080ff">1C</span> <span style="color:#8080ff">06</span> <span style="color:#8080ff">00</span> <span style="color:#8080ff">20</span>  <span style="color:#8080ff">08</span> <span style="color:#8080ff">ED</span> <span style="color:#8080ff">00</span> <span style="color:#8080ff">E0</span> <span style="color:#8080ff">04</span> <span style="color:#8080ff">06</span> <span style="color:#8080ff">00</span> <span style="color:#8080ff">20</span>  <span style="color:#0000e0;font-weight:normal;-webkit-text-stroke:0.3px #0000e0">.`pG...·.Ý.Ó...</span></div><div class="ln"><span style="color:#808080">08000F90</span>  <span style="color:#8080ff">14</span> <span style="color:#8080ff">06</span> <span style="color:#8080ff">00</span> <span style="color:#8080ff">20</span> <span style="color:#8080ff">10</span> <span style="color:#8080ff">06</span> <span style="color:#8080ff">00</span> <span style="color:#8080ff">20</span>  <span style="color:#8080ff">08</span> <span style="color:#8080ff">06</span> <span style="color:#8080ff">00</span> <span style="color:#8080ff">20</span> <span style="color:#8080ff">20</span> <span style="color:#8080ff">06</span> <span style="color:#8080ff">00</span> <span style="color:#8080ff">20</span>  <span style="color:#0000e0;font-weight:normal;-webkit-text-stroke:0.3px #0000e0">...·...·...··..</span></div><div class="ln"><span style="color:#808080">08000FA0</span>  <span style="color:#8080ff">F8</span> <span style="color:#8080ff">05</span> <span style="color:#8080ff">00</span> <span style="color:#8080ff">20</span> <span style="color:#8080ff">00</span> <span style="color:#8080ff">06</span> <span style="color:#8080ff">00</span> <span style="color:#8080ff">20</span>  <span style="color:#8080ff">4B</span> <span style="color:#8080ff">06</span> <span style="color:#8080ff">00</span> <span style="color:#8080ff">20</span> <span style="color:#8080ff">FC</span> <span style="color:#8080ff">05</span> <span style="color:#8080ff">00</span> <span style="color:#8080ff">20</span>  <span style="color:#0000e0;font-weight:normal;-webkit-text-stroke:0.3px #0000e0">°..·...·K..·³..</span></div><div class="ln"><span style="color:#808080">08000FB0</span>  <span style="color:#8080ff">4D</span> <span style="color:#8080ff">06</span> <span style="color:#8080ff">00</span> <span style="color:#8080ff">20</span> <span style="color:#8080ff">0C</span> <span style="color:#8080ff">06</span> <span style="color:#8080ff">00</span> <span style="color:#8080ff">20</span>  <span style="color:#8080ff">18</span> <span style="color:#8080ff">06</span> <span style="color:#8080ff">00</span> <span style="color:#8080ff">20</span> <span style="color:#008000">62</span> <span style="color:#008000">B3</span> <span style="color:#008000">8B</span> <span style="color:#008000">07</span>  <span style="color:#0000e0;font-weight:normal;-webkit-text-stroke:0.3px #0000e0">M..·...·...·b¦Ï.</span></div><div class="ln"><span style="color:#808080">08000FC0</span>  <span style="color:#008000">08</span> <span style="color:#008000">D0</span> <span style="color:#008000">52</span> <span style="color:#008000">1E</span> <span style="color:#008000">11</span> <span style="color:#008000">F8</span> <span style="color:#008000">01</span> <span style="color:#008000">3B</span>  <span style="color:#008000">00</span> <span style="color:#008000">F8</span> <span style="color:#008000">01</span> <span style="color:#008000">3B</span> <span style="color:#008000">00</span> <span style="color:#008000">F0</span> <span style="color:#008000">24</span> <span style="color:#008000">80</span>  <span style="color:#0000e0;font-weight:normal;-webkit-text-stroke:0.3px #0000e0">.ðR..°.;.°.;.$Ç</span></div><div class="ln"><span style="color:#808080">08000FD0</span>  <span style="color:#008000">8B</span> <span style="color:#008000">07</span> <span style="color:#008000">F6</span> <span style="color:#008000">D1</span> <span style="color:#008000">83</span> <span style="color:#008000">07</span> <span style="color:#008000">40</span> <span style="color:#008000">F0</span>  <span style="color:#008000">20</span> <span style="color:#008000">80</span> <span style="color:#008000">00</span> <span style="color:#008000">BF</span> <span style="color:#008000">10</span> <span style="color:#008000">3A</span> <span style="color:#008000">07</span> <span style="color:#008000">D3</span>  <span style="color:#0000e0;font-weight:normal;-webkit-text-stroke:0.3px #0000e0">Ï.÷Ðâ.@·Ç.+.:.Ë</span></div><div class="ln"><span style="color:#808080">08000FE0</span>  <span style="color:#008000">30</span> <span style="color:#008000">B4</span> <span style="color:#008000">B1</span> <span style="color:#008000">E8</span> <span style="color:#008000">38</span> <span style="color:#008000">10</span> <span style="color:#008000">10</span> <span style="color:#008000">3A</span>  <span style="color:#008000">A0</span> <span style="color:#008000">E8</span> <span style="color:#008000">38</span> <span style="color:#008000">10</span> <span style="color:#008000">F9</span> <span style="color:#008000">D2</span> <span style="color:#008000">30</span> <span style="color:#008000">BC</span>  <span style="color:#0000e0;font-weight:normal;-webkit-text-stroke:0.3px #0000e0">0¦¦Þ8..:áÞ8.¨Ê0+</span></div><div class="ln"><span style="color:#808080">08000FF0</span>  <span style="color:#008000">53</span> <span style="color:#008000">07</span> <span style="color:#008000">24</span> <span style="color:#008000">BF</span> <span style="color:#008000">B1</span> <span style="color:#008000">E8</span> <span style="color:#008000">08</span> <span style="color:#008000">10</span>  <span style="color:#008000">A0</span> <span style="color:#008000">E8</span> <span style="color:#008000">08</span> <span style="color:#008000">10</span> <span style="color:#008000">44</span> <span style="color:#008000">BF</span> <span style="color:#008000">51</span> <span style="color:#008000">F8</span>  <span style="color:#0000e0;font-weight:normal;-webkit-text-stroke:0.3px #0000e0">S.$+¦Þ..áÞ..D+Q°</span></div><div class="ln"><span style="color:#808080">08001000</span>  <span style="color:#008000">04</span> <span style="color:#008000">3B</span> <span style="color:#008000">40</span> <span style="color:#008000">F8</span> <span style="color:#008000">04</span> <span style="color:#008000">3B</span> <span style="color:#008000">D2</span> <span style="color:#008000">07</span>  <span style="color:#008000">24</span> <span style="color:#008000">BF</span> <span style="color:#008000">31</span> <span style="color:#008000">F8</span> <span style="color:#008000">02</span> <span style="color:#008000">2B</span> <span style="color:#008000">20</span> <span style="color:#008000">F8</span>  <span style="color:#0000e0;font-weight:normal;-webkit-text-stroke:0.3px #0000e0">.;@°.;Ê.$+1°.+·°</span></div><div class="ln"><span style="color:#808080">08001010</span>  <span style="color:#008000">02</span> <span style="color:#008000">2B</span> <span style="color:#008000">44</span> <span style="color:#008000">BF</span> <span style="color:#008000">0B</span> <span style="color:#008000">78</span> <span style="color:#008000">03</span> <span style="color:#008000">70</span>  <span style="color:#008000">70</span> <span style="color:#008000">47</span> <span style="color:#008000">08</span> <span style="color:#008000">3A</span> <span style="color:#008000">07</span> <span style="color:#008000">D3</span> <span style="color:#008000">B1</span> <span style="color:#008000">E8</span>  <span style="color:#0000e0;font-weight:normal;-webkit-text-stroke:0.3px #0000e0">.+D+.x.ppG.:.Ë¦Þ</span></div><div class="ln"><span style="color:#808080">08001020</span>  <span style="color:#008000">08</span> <span style="color:#008000">10</span> <span style="color:#008000">08</span> <span style="color:#008000">3A</span> <span style="color:#008000">40</span> <span style="color:#008000">F8</span> <span style="color:#008000">04</span> <span style="color:#008000">3B</span>  <span style="color:#008000">40</span> <span style="color:#008000">F8</span> <span style="color:#008000">04</span> <span style="color:#008000">CB</span> <span style="color:#008000">F7</span> <span style="color:#008000">D2</span> <span style="color:#008000">53</span> <span style="color:#008000">07</span>  <span style="color:#0000e0;font-weight:normal;-webkit-text-stroke:0.3px #0000e0">...:@°.;@°.-¸ÊS.</span></div><div class="ln"><span style="color:#808080">08001030</span>  <span style="color:#008000">E4</span> <span style="color:#008000">E7</span> <span style="color:#008000">50</span> <span style="color:#008000">F8</span> <span style="color:#008000">04</span> <span style="color:#008000">1B</span> <span style="color:#008000">61</span> <span style="color:#008000">B1</span>  <span style="color:#008000">50</span> <span style="color:#008000">F8</span> <span style="color:#008000">04</span> <span style="color:#008000">2B</span> <span style="color:#008000">D3</span> <span style="color:#008000">07</span> <span style="color:#008000">44</span> <span style="color:#008000">BF</span>  <span style="color:#0000e0;font-weight:normal;-webkit-text-stroke:0.3px #0000e0">õÞP°..a¦P°.+Ê.D+</span></div><div class="ln"><span style="color:#808080">08001040</span>  <span style="color:#008000">A9</span> <span style="color:#008000">F1</span> <span style="color:#008000">01</span> <span style="color:#008000">03</span> <span style="color:#008000">9A</span> <span style="color:#008000">18</span> <span style="color:#008000">00</span> <span style="color:#008000">23</span>  <span style="color:#008000">42</span> <span style="color:#008000">F8</span> <span style="color:#008000">04</span> <span style="color:#008000">3B</span> <span style="color:#008000">09</span> <span style="color:#008000">1F</span> <span style="color:#008000">FA</span> <span style="color:#008000">D1</span>  <span style="color:#0000e0;font-weight:normal;-webkit-text-stroke:0.3px #0000e0">®±..Ü..#B°.;..·Ð</span></div><div class="ln"><span style="color:#808080">08001050</span>  <span style="color:#008000">EF</span> <span style="color:#008000">E7</span> <span style="color:#008000">70</span> <span style="color:#008000">47</span> <span style="color:#008000">80</span> <span style="color:#008000">B5</span> <span style="color:#008000">8C</span> <span style="color:#008000">48</span>  <span style="color:#008000">00</span> <span style="color:#008000">68</span> <span style="color:#008000">50</span> <span style="color:#008000">F0</span> <span style="color:#008000">01</span> <span style="color:#008000">00</span> <span style="color:#008000">8A</span> <span style="color:#008000">49</span>  <span style="color:#0000e0;font-weight:normal;-webkit-text-stroke:0.3px #0000e0">´ÞpGÇÁîH.hP..èI</span></div><div class="ln"><span style="color:#808080">08001060</span>  <span style="color:#008000">08</span> <span style="color:#008000">60</span> <span style="color:#008000">8A</span> <span style="color:#008000">48</span> <span style="color:#008000">00</span> <span style="color:#008000">68</span> <span style="color:#008000">8A</span> <span style="color:#008000">49</span>  <span style="color:#008000">08</span> <span style="color:#008000">40</span> <span style="color:#008000">88</span> <span style="color:#008000">49</span> <span style="color:#008000">08</span> <span style="color:#008000">60</span> <span style="color:#008000">86</span> <span style="color:#008000">48</span>  <span style="color:#0000e0;font-weight:normal;-webkit-text-stroke:0.3px #0000e0">.`èH.hèI.@êI.`åH</span></div><div class="ln"><span style="color:#808080">08001070</span>  <span style="color:#008000">00</span> <span style="color:#008000">68</span> <span style="color:#008000">88</span> <span style="color:#008000">49</span> <span style="color:#008000">08</span> <span style="color:#008000">40</span> <span style="color:#008000">84</span> <span style="color:#008000">49</span>  <span style="color:#008000">08</span> <span style="color:#008000">60</span> <span style="color:#008000">83</span> <span style="color:#008000">48</span> <span style="color:#008000">00</span> <span style="color:#008000">68</span> <span style="color:#008000">30</span> <span style="color:#008000">F4</span>  <span style="color:#0000e0;font-weight:normal;-webkit-text-stroke:0.3px #0000e0">.hêI.@äI.`âH.h0¶</span></div><div class="ln"><span style="color:#808080">08001080</span>  <span style="color:#008000">80</span> <span style="color:#008000">20</span> <span style="color:#008000">81</span> <span style="color:#008000">49</span> <span style="color:#008000">08</span> <span style="color:#008000">60</span> <span style="color:#008000">81</span> <span style="color:#008000">48</span>  <span style="color:#008000">00</span> <span style="color:#008000">68</span> <span style="color:#008000">30</span> <span style="color:#008000">F4</span> <span style="color:#008000">FE</span> <span style="color:#008000">00</span> <span style="color:#008000">7F</span> <span style="color:#008000">49</span>  <span style="color:#0000e0;font-weight:normal;-webkit-text-stroke:0.3px #0000e0">Ç·.I.`.H.h0¶¦..I</span></div><div class="ln"><span style="color:#808080">08001090</span>  <span style="color:#008000">08</span> <span style="color:#008000">60</span> <span style="color:#008000">81</span> <span style="color:#008000">48</span> <span style="color:#008000">5F</span> <span style="color:#008000">F4</span> <span style="color:#008000">1F</span> <span style="color:#008000">01</span>  <span style="color:#008000">01</span> <span style="color:#008000">60</span> <span style="color:#008000">00</span> <span style="color:#008000">F0</span> <span style="color:#008000">59</span> <span style="color:#008000">F8</span> <span style="color:#008000">00</span> <span style="color:#008000">F0</span>  <span style="color:#0000e0;font-weight:normal;-webkit-text-stroke:0.3px #0000e0">.`.H_¶...`.Y°.</span></div><div class="ln"><span style="color:#808080">080010A0</span>  <span style="color:#008000">53</span> <span style="color:#008000">F8</span> <span style="color:#008000">7E</span> <span style="color:#008000">48</span> <span style="color:#008000">5F</span> <span style="color:#008000">F0</span> <span style="color:#008000">00</span> <span style="color:#008000">61</span>  <span style="color:#008000">01</span> <span style="color:#008000">60</span> <span style="color:#008000">01</span> <span style="color:#008000">BD</span> <span style="color:#008000">10</span> <span style="color:#008000">B4</span> <span style="color:#008000">00</span> <span style="color:#008000">20</span>  <span style="color:#0000e0;font-weight:normal;-webkit-text-stroke:0.3px #0000e0">S°~H_.a.`.¢.¦.</span></div><div class="ln"><span style="color:#808080">080010B0</span>  <span style="color:#008000">00</span> <span style="color:#008000">21</span> <span style="color:#008000">00</span> <span style="color:#008000">22</span> <span style="color:#008000">75</span> <span style="color:#008000">4B</span> <span style="color:#008000">1B</span> <span style="color:#008000">68</span>  <span style="color:#008000">13</span> <span style="color:#008000">F0</span> <span style="color:#008000">0C</span> <span style="color:#008000">03</span> <span style="color:#008000">18</span> <span style="color:#008000">00</span> <span style="color:#008000">03</span> <span style="color:#008000">00</span>  <span style="color:#0000e0;font-weight:normal;-webkit-text-stroke:0.3px #0000e0">.!."uK.h........</span></div><div class="ln"><span style="color:#808080">080010C0</span>  <span style="color:#008000">00</span> <span style="color:#008000">2B</span> <span style="color:#008000">04</span> <span style="color:#008000">D0</span> <span style="color:#008000">04</span> <span style="color:#008000">2B</span> <span style="color:#008000">06</span> <span style="color:#008000">D0</span>  <span style="color:#008000">08</span> <span style="color:#008000">2B</span> <span style="color:#008000">08</span> <span style="color:#008000">D0</span> <span style="color:#008000">2B</span> <span style="color:#008000">E0</span> <span style="color:#008000">74</span> <span style="color:#008000">4B</span>  <span style="color:#0000e0;font-weight:normal;-webkit-text-stroke:0.3px #0000e0">.+.ð.+.ð.+.ð+ÓtK</span></div></div><div style="left:5px;top:1094px;width:53px;height:14px;border-top:1px solid #808080;border-left:1px solid #808080;border-right:1px solid #fff;border-bottom:1px solid #fff"></div><div class="t" style="left:6px;top:1094.5px;font-family:'Liberation Mono',monospace;font-size:10.6px;line-height:13px">00000F84</div><div style="left:60px;top:1094px;width:214px;height:14px;border-top:1px solid #808080;border-left:1px solid #808080;border-right:1px solid #fff;border-bottom:1px solid #fff"></div><div class="t" style="left:61px;top:1094.5px;font-family:'Liberation Mono',monospace;font-size:10.6px;line-height:13px">08000F50: __JLINKMEM_SendChar_4+2</div><div style="left:276px;top:1094px;width:10px;height:14px;border-top:1px solid #808080;border-left:1px solid #808080;border-right:1px solid #fff;border-bottom:1px solid #fff"></div><div class="t" style="left:277px;top:1094.5px;font-family:'Liberation Mono',monospace;font-size:10.6px;line-height:13px"></div><div style="left:1095px;top:718px;width:301px;height:19px;background:#d4d0c8;border:1px solid #a4a4a0"></div><svg style="position:absolute;left:1099px;top:720px" width="15" height="15" viewBox="0 0 15 15"><defs><linearGradient id="ghx1099" x1="0" x2="1"><stop offset="0" stop-color="#40e0ff"/><stop offset="1" stop-color="#2040d0"/></linearGradient></defs><rect x="0.5" y="0.5" width="13" height="13.2" rx="1" fill="#f4f8ff" stroke="#4a80d8"/><rect x="0.5" y="0.5" width="13" height="2.5" fill="url(#ghx1099)"/><path d="M7 4 L10.5 6 L10.5 10.3 L7 12.3 L3.5 10.3 L3.5 6Z" fill="#e0ecff" stroke="#5a5af8" stroke-width="1.3"/></svg><div class="t" style="left:1118px;top:721.7px;font-size:10px;line-height:12px">Stack view</div><div style="left:1343px;top:722px;width:10px;height:9px;border:1px solid #000;border-top-width:2px"></div><div style="left:1363px;top:722px;width:7px;height:6px;border:1px solid #000;border-top-width:2px"></div><div style="left:1361px;top:725px;width:7px;height:6px;border:1px solid #000;border-top-width:2px;background:#d4d0c8"></div><svg style="position:absolute;left:1380.5px;top:722.5px" width="9" height="9" viewBox="0 0 9 9"><path d="M1.2 1.2L7.8 7.8M7.8 1.2L1.2 7.8" stroke="#000" stroke-width="1.3"/></svg><div style="left:1095px;top:739px;width:301px;height:373px;background:#d4d0c8"></div><div style="left:1095px;top:739px;width:2px;height:340px;border-left:1px solid #808080;border-right:1px solid #404040"></div><div style="left:1095px;top:739px;width:301px;height:2px;border-top:1px solid #808080;border-bottom:1px solid #404040"></div><div style="left:1097px;top:741px;width:283px;height:338px;background:#ccffff"></div><div style="left:1380px;top:741px;width:15px;height:352px;background:#e8e6e2"></div><div style="left:1380px;top:741px;width:15px;height:14px;background:#d4d0c8;border-top:1px solid #fff;border-left:1px solid #fff;border-right:1px solid #404040;border-bottom:1px solid #404040"><svg style="position:absolute;left:3px;top:4px" width="8" height="5"><path d="M0 4 L7 4 L3.5 0Z" fill="#000"/></svg></div><div style="left:1380px;top:1079px;width:15px;height:14px;background:#d4d0c8;border-top:1px solid #fff;border-left:1px solid #fff;border-right:1px solid #404040;border-bottom:1px solid #404040"><svg style="position:absolute;left:3px;top:4px" width="8" height="5"><path d="M0 0 L7 0 L3.5 4Z" fill="#000"/></svg></div><div style="left:1380px;top:795px;width:15px;height:8px;background:#d4d0c8;border-top:1px solid #fff;border-left:1px solid #fff;border-right:1px solid #404040;border-bottom:1px solid #404040"></div><div style="left:1097px;top:740.3px;width:283px;height:13.68px;background:#66ccff"></div><div style="left:1169.4px;top:740.3px;width:72.5px;height:13.68px;background:#008000"></div><div style="left:1242px;top:740.3px;width:110px;height:13.68px;background:#0000f0"></div><div class="m" style="left:1097.4px;top:742.10px"><div class="ln"><span style="color:#0000f0">20000738</span>  <span style="color:#70d0ff">94FDD971</span>  <span style="color:#80d8ff">MEMORY:94FDD971</span></div><div class="ln"><span style="color:#808080;font-weight:normal;-webkit-text-stroke:0.35px #808080">2000073C</span>  <span style="color:#008000">BDFD7E85</span>  <span style="color:#808080;font-weight:normal;-webkit-text-stroke:0.35px #808080">MEMORY:BDFD7E85</span></div><div class="ln"><span style="color:#808080;font-weight:normal;-webkit-text-stroke:0.35px #808080">20000740</span>  <span style="color:#008000">BD000000</span>  <span style="color:#808080;font-weight:normal;-webkit-text-stroke:0.35px #808080">MEMORY:BD000000</span></div><div class="ln"><span style="color:#808080;font-weight:normal;-webkit-text-stroke:0.35px #808080">20000744</span>  <span style="color:#008000">08001EE7</span>  <span style="color:#0000ff">__main_0+55</span></div><div class="ln"><span style="color:#808080;font-weight:normal;-webkit-text-stroke:0.35px #808080">20000748</span>  <span style="color:#008000">2000025C</span>  <span style="color:#808080;font-weight:normal;-webkit-text-stroke:0.35px #808080">P2_zi:</span><span style="color:#0000ff">StackLP</span></div><div class="ln"><span style="color:#808080;font-weight:normal;-webkit-text-stroke:0.35px #808080">2000074C</span>  <span style="color:#008000">00000200</span>  <span style="color:#808080;font-weight:normal;-webkit-text-stroke:0.35px #808080">MEMORY:00000200</span></div><div class="ln"><span style="color:#808080;font-weight:normal;-webkit-text-stroke:0.35px #808080">20000750</span>  <span style="color:#008000">00000002</span>  <span style="color:#808080;font-weight:normal;-webkit-text-stroke:0.35px #808080">MEMORY:00000002</span></div><div class="ln"><span style="color:#808080;font-weight:normal;-webkit-text-stroke:0.35px #808080">20000754</span>  <span style="color:#008000">5208127F</span>  <span style="color:#808080;font-weight:normal;-webkit-text-stroke:0.35px #808080">MEMORY:5208127F</span></div><div class="ln"><span style="color:#808080;font-weight:normal;-webkit-text-stroke:0.35px #808080">20000758</span>  <span style="color:#008000">8BA16B8A</span>  <span style="color:#808080;font-weight:normal;-webkit-text-stroke:0.35px #808080">MEMORY:8BA16B8A</span></div><div class="ln"><span style="color:#808080;font-weight:normal;-webkit-text-stroke:0.35px #808080">2000075C</span>  <span style="color:#008000">4F19A1C9</span>  <span style="color:#808080;font-weight:normal;-webkit-text-stroke:0.35px #808080">MEMORY:4F19A1C9</span></div><div class="ln"><span style="color:#808080;font-weight:normal;-webkit-text-stroke:0.35px #808080">20000760</span>  <span style="color:#008000">92BAFA4D</span>  <span style="color:#808080;font-weight:normal;-webkit-text-stroke:0.35px #808080">MEMORY:92BAFA4D</span></div><div class="ln"><span style="color:#808080;font-weight:normal;-webkit-text-stroke:0.35px #808080">20000764</span>  <span style="color:#008000">2BAECA64</span>  <span style="color:#808080;font-weight:normal;-webkit-text-stroke:0.35px #808080">MEMORY:2BAECA64</span></div><div class="ln"><span style="color:#808080;font-weight:normal;-webkit-text-stroke:0.35px #808080">20000768</span>  <span style="color:#008000">2A0CAD36</span>  <span style="color:#808080;font-weight:normal;-webkit-text-stroke:0.35px #808080">MEMORY:2A0CAD36</span></div><div class="ln"><span style="color:#808080;font-weight:normal;-webkit-text-stroke:0.35px #808080">2000076C</span>  <span style="color:#008000">5B0F917D</span>  <span style="color:#808080;font-weight:normal;-webkit-text-stroke:0.35px #808080">MEMORY:5B0F917D</span></div><div class="ln"><span style="color:#808080;font-weight:normal;-webkit-text-stroke:0.35px #808080">20000770</span>  <span style="color:#008000">89BD0F25</span>  <span style="color:#808080;font-weight:normal;-webkit-text-stroke:0.35px #808080">MEMORY:89BD0F25</span></div><div class="ln"><span style="color:#808080;font-weight:normal;-webkit-text-stroke:0.35px #808080">20000774</span>  <span style="color:#008000">A82A5FEB</span>  <span style="color:#808080;font-weight:normal;-webkit-text-stroke:0.35px #808080">MEMORY:A82A5FEB</span></div><div class="ln"><span style="color:#808080;font-weight:normal;-webkit-text-stroke:0.35px #808080">20000778</span>  <span style="color:#008000">A8A09A12</span>  <span style="color:#808080;font-weight:normal;-webkit-text-stroke:0.35px #808080">MEMORY:A8A09A12</span></div><div class="ln"><span style="color:#808080;font-weight:normal;-webkit-text-stroke:0.35px #808080">2000077C</span>  <span style="color:#008000">E5F47C2F</span>  <span style="color:#808080;font-weight:normal;-webkit-text-stroke:0.35px #808080">MEMORY:E5F47C2F</span></div><div class="ln"><span style="color:#808080;font-weight:normal;-webkit-text-stroke:0.35px #808080">20000780</span>  <span style="color:#008000">3D2854CA</span>  <span style="color:#808080;font-weight:normal;-webkit-text-stroke:0.35px #808080">MEMORY:3D2854CA</span></div><div class="ln"><span style="color:#808080;font-weight:normal;-webkit-text-stroke:0.35px #808080">20000784</span>  <span style="color:#008000">757FD650</span>  <span style="color:#808080;font-weight:normal;-webkit-text-stroke:0.35px #808080">MEMORY:757FD650</span></div><div class="ln"><span style="color:#808080;font-weight:normal;-webkit-text-stroke:0.35px #808080">20000788</span>  <span style="color:#008000">11015FE5</span>  <span style="color:#808080;font-weight:normal;-webkit-text-stroke:0.35px #808080">MEMORY:11015FE5</span></div><div class="ln"><span style="color:#808080;font-weight:normal;-webkit-text-stroke:0.35px #808080">2000078C</span>  <span style="color:#008000">712ED679</span>  <span style="color:#808080;font-weight:normal;-webkit-text-stroke:0.35px #808080">MEMORY:712ED679</span></div><div class="ln"><span style="color:#808080;font-weight:normal;-webkit-text-stroke:0.35px #808080">20000790</span>  <span style="color:#008000">F1B068EC</span>  <span style="color:#808080;font-weight:normal;-webkit-text-stroke:0.35px #808080">MEMORY:F1B068EC</span></div><div class="ln"><span style="color:#808080;font-weight:normal;-webkit-text-stroke:0.35px #808080">20000794</span>  <span style="color:#008000">51D9E7D1</span>  <span style="color:#808080;font-weight:normal;-webkit-text-stroke:0.35px #808080">MEMORY:51D9E7D1</span></div></div><div style="left:1097px;top:1079px;width:57px;height:14px;overflow:hidden;border-top:1px solid #808080;border-left:1px solid #808080;border-right:1px solid #fff;border-bottom:1px solid #fff"></div><div class="t" style="left:1098px;top:1080.5px;font-family:'Liberation Mono',monospace;font-size:10.6px;line-height:13px;overflow:hidden;width:55px">UNKNOWN</div><div style="left:1146px;top:1079px;width:116px;height:14px;overflow:hidden;border-top:1px solid #808080;border-left:1px solid #808080;border-right:1px solid #fff;border-bottom:1px solid #fff"></div><div class="t" style="left:1147px;top:1080.5px;font-family:'Liberation Mono',monospace;font-size:10.6px;line-height:13px;overflow:hidden;width:114px">20000738: P2_ui:20</div><div style="left:1264px;top:1079px;width:116px;height:14px;overflow:hidden;border-top:1px solid #808080;border-left:1px solid #808080;border-right:1px solid #fff;border-bottom:1px solid #fff"></div><div class="t" style="left:1265px;top:1080.5px;font-family:'Liberation Mono',monospace;font-size:10.6px;line-height:13px;overflow:hidden;width:114px">(Synchronized with PC)</div><div style="left:1097px;top:1094px;width:283px;height:17px;background:#e8e6e2"></div><div style="left:1097px;top:1095.5px;width:15px;height:15px;background:#d4d0c8;border-top:1px solid #fff;border-left:1px solid #fff;border-right:1px solid #404040;border-bottom:1px solid #404040"><svg style="position:absolute;left:4px;top:3px" width="5" height="8"><path d="M4 0 L4 7 L0 3.5Z" fill="#000"/></svg></div><div style="left:1112px;top:1095.5px;width:121px;height:15px;background:#d4d0c8;border-top:1px solid #fff;border-left:1px solid #fff;border-right:1px solid #404040;border-bottom:1px solid #404040"></div><div style="left:1365px;top:1095.5px;width:15px;height:15px;background:#d4d0c8;border-top:1px solid #fff;border-left:1px solid #fff;border-right:1px solid #404040;border-bottom:1px solid #404040"><svg style="position:absolute;left:5px;top:3px" width="5" height="8"><path d="M0 0 L0 7 L4 3.5Z" fill="#000"/></svg></div><div style="left:1380px;top:1080px;width:15px;height:13px;background:#d4d0c8;border-top:1px solid #fff;border-left:1px solid #fff;border-right:1px solid #404040;border-bottom:1px solid #404040"><svg style="position:absolute;left:3px;top:4px" width="8" height="5"><path d="M0 0 L7 0 L3.5 4Z" fill="#000"/></svg></div><div style="left:2px;top:1112px;width:1396px;height:1px;background:#fff"></div><div style="left:4px;top:1116px;width:1392px;height:20px;background:#d4d0c8;border:1px solid #a4a4a0"></div><svg style="position:absolute;left:8px;top:1118px" width="16" height="16" viewBox="0 0 16 16"><defs><linearGradient id="go" x1="0" x2="1"><stop offset="0" stop-color="#40d8e0"/><stop offset="1" stop-color="#0010c0"/></linearGradient></defs><rect x="1.2" y="0.3" width="12.6" height="14.5" rx="0.8" fill="#f4f6ff" stroke="#788490" stroke-width="1.1"/><rect x="1" y="0" width="13" height="3" fill="url(#go)"/><path d="M4 6.5h6.5M4 8.5h6.5M4 10.5h6.5M4 12.5h6.5" stroke="#98a4b4" stroke-width="1"/></svg><div class="t" style="left:27px;top:1119.7px;font-size:10px;line-height:12px">Output window</div><div style="left:1343px;top:1120px;width:10px;height:9px;border:1px solid #000;border-top-width:2px"></div><div style="left:1363px;top:1120px;width:7px;height:6px;border:1px solid #000;border-top-width:2px"></div><div style="left:1361px;top:1123px;width:7px;height:6px;border:1px solid #000;border-top-width:2px;background:#d4d0c8"></div><svg style="position:absolute;left:1380.5px;top:1120.5px" width="9" height="9" viewBox="0 0 9 9"><path d="M1.2 1.2L7.8 7.8M7.8 1.2L1.2 7.8" stroke="#000" stroke-width="1.3"/></svg><div style="left:4px;top:1137px;width:1392px;height:207px;background:#fff;border-top:2px solid #404040;border-left:2px solid #404040"></div><div style="left:4px;top:1137px;width:1392px;height:1px;background:#808080"></div><div style="left:1380px;top:1138px;width:15px;height:205px;background:#e8e6e2"></div><div style="left:1380px;top:1138px;width:15px;height:14px;background:#d4d0c8;border-top:1px solid #fff;border-left:1px solid #fff;border-right:1px solid #404040;border-bottom:1px solid #404040"><svg style="position:absolute;left:3px;top:4px" width="8" height="5"><path d="M0 4 L7 4 L3.5 0Z" fill="#000"/></svg></div><div style="left:1380px;top:1329px;width:15px;height:14px;background:#d4d0c8;border-top:1px solid #fff;border-left:1px solid #fff;border-right:1px solid #404040;border-bottom:1px solid #404040"><svg style="position:absolute;left:3px;top:4px" width="8" height="5"><path d="M0 0 L7 0 L3.5 4Z" fill="#000"/></svg></div><div style="left:1380px;top:1268px;width:15px;height:58px;background:#d4d0c8;border-top:1px solid #fff;border-left:1px solid #fff;border-right:1px solid #404040;border-bottom:1px solid #404040"></div><div style="left:1380px;top:1152px;width:15px;height:177px;background:#e8e6e2"></div><div style="left:1380px;top:1268px;width:15px;height:58px;background:#d4d0c8;border-top:1px solid #fff;border-left:1px solid #fff;border-right:1px solid #404040;border-bottom:1px solid #404040"></div><div class="m" style="left:9.5px;top:1140.40px;color:#000"><div class="ln">Debugger: process has exited (exit code 0)</div><div class="ln">Cannot find sync source "view:IDA View-A"; ignoring group</div><div class="ln">FFFFFFFF: process  has started (pid=4294967294)</div><div class="ln">Debugger: attached to process &lt;GDB remote process&gt; (pid=4294967294)</div><div class="ln">GDB&gt;load</div><div class="ln">&lt;error sending command to monitor&gt;</div><div class="ln">Command "OpenSourceFile" failed</div><div class="ln">Debugger: process has exited (exit code 0)</div><div class="ln">Cannot find sync source "view:IDA View-A"; ignoring group</div><div class="ln">FFFFFFFF: process  has started (pid=4294967294)</div><div class="ln">Debugger: attached to process &lt;GDB remote process&gt; (pid=4294967294)</div><div class="ln">Debugger: process has exited (exit code 0)</div><div class="ln">Cannot find sync source "view:IDA View-A"; ignoring group</div><div class="ln">FFFFFFFF: process  has started (pid=4294967294)</div><div class="ln">Debugger: attached to process &lt;GDB remote process&gt; (pid=4294967294)</div></div><div style="left:4px;top:1346px;width:44px;height:21px;background:#d4d0c8;border-top:1px solid #fff;border-left:1px solid #fff;border-right:1px solid #404040;border-bottom:1px solid #404040;box-shadow:inset -1px -1px 0 #808080"></div><div class="t" style="left:16px;top:1350px;font-size:10px;line-height:12px">GDB</div><div style="left:51px;top:1346px;width:1345px;height:21px;background:#fff;border-top:2px solid #404040;border-left:2px solid #404040;border-right:1px solid #fff;border-bottom:1px solid #d4d0c8"></div><div style="left:4px;top:1370px;width:72px;height:16px;border-top:1px solid #808080;border-left:1px solid #808080;border-right:1px solid #fff;border-bottom:1px solid #fff"></div><div class="t" style="left:6px;top:1371.5px;font-family:'Liberation Mono',monospace;font-size:10.6px;line-height:13px">AU:  idle</div><div style="left:78px;top:1370px;width:67px;height:16px;border-top:1px solid #808080;border-left:1px solid #808080;border-right:1px solid #fff;border-bottom:1px solid #fff"></div><div class="t" style="left:80px;top:1371.5px;font-family:'Liberation Mono',monospace;font-size:10.6px;line-height:13px">Down</div><div style="left:148px;top:1370px;width:67px;height:16px;border-top:1px solid #808080;border-left:1px solid #808080;border-right:1px solid #fff;border-bottom:1px solid #fff"></div><div class="t" style="left:150px;top:1371.5px;font-family:'Liberation Mono',monospace;font-size:10.6px;line-height:13px">Disk: 12GB</div><svg style="position:absolute;left:1383px;top:1375px" width="13" height="13" viewBox="0 0 13 13"><path d="M12 1L1 12M12 5L5 12M12 9L9 12" stroke="#fff" stroke-width="1"/><path d="M12 2L2 12M12 6L6 12M12 10L10 12" stroke="#808080" stroke-width="1"/></svg></body></html>
